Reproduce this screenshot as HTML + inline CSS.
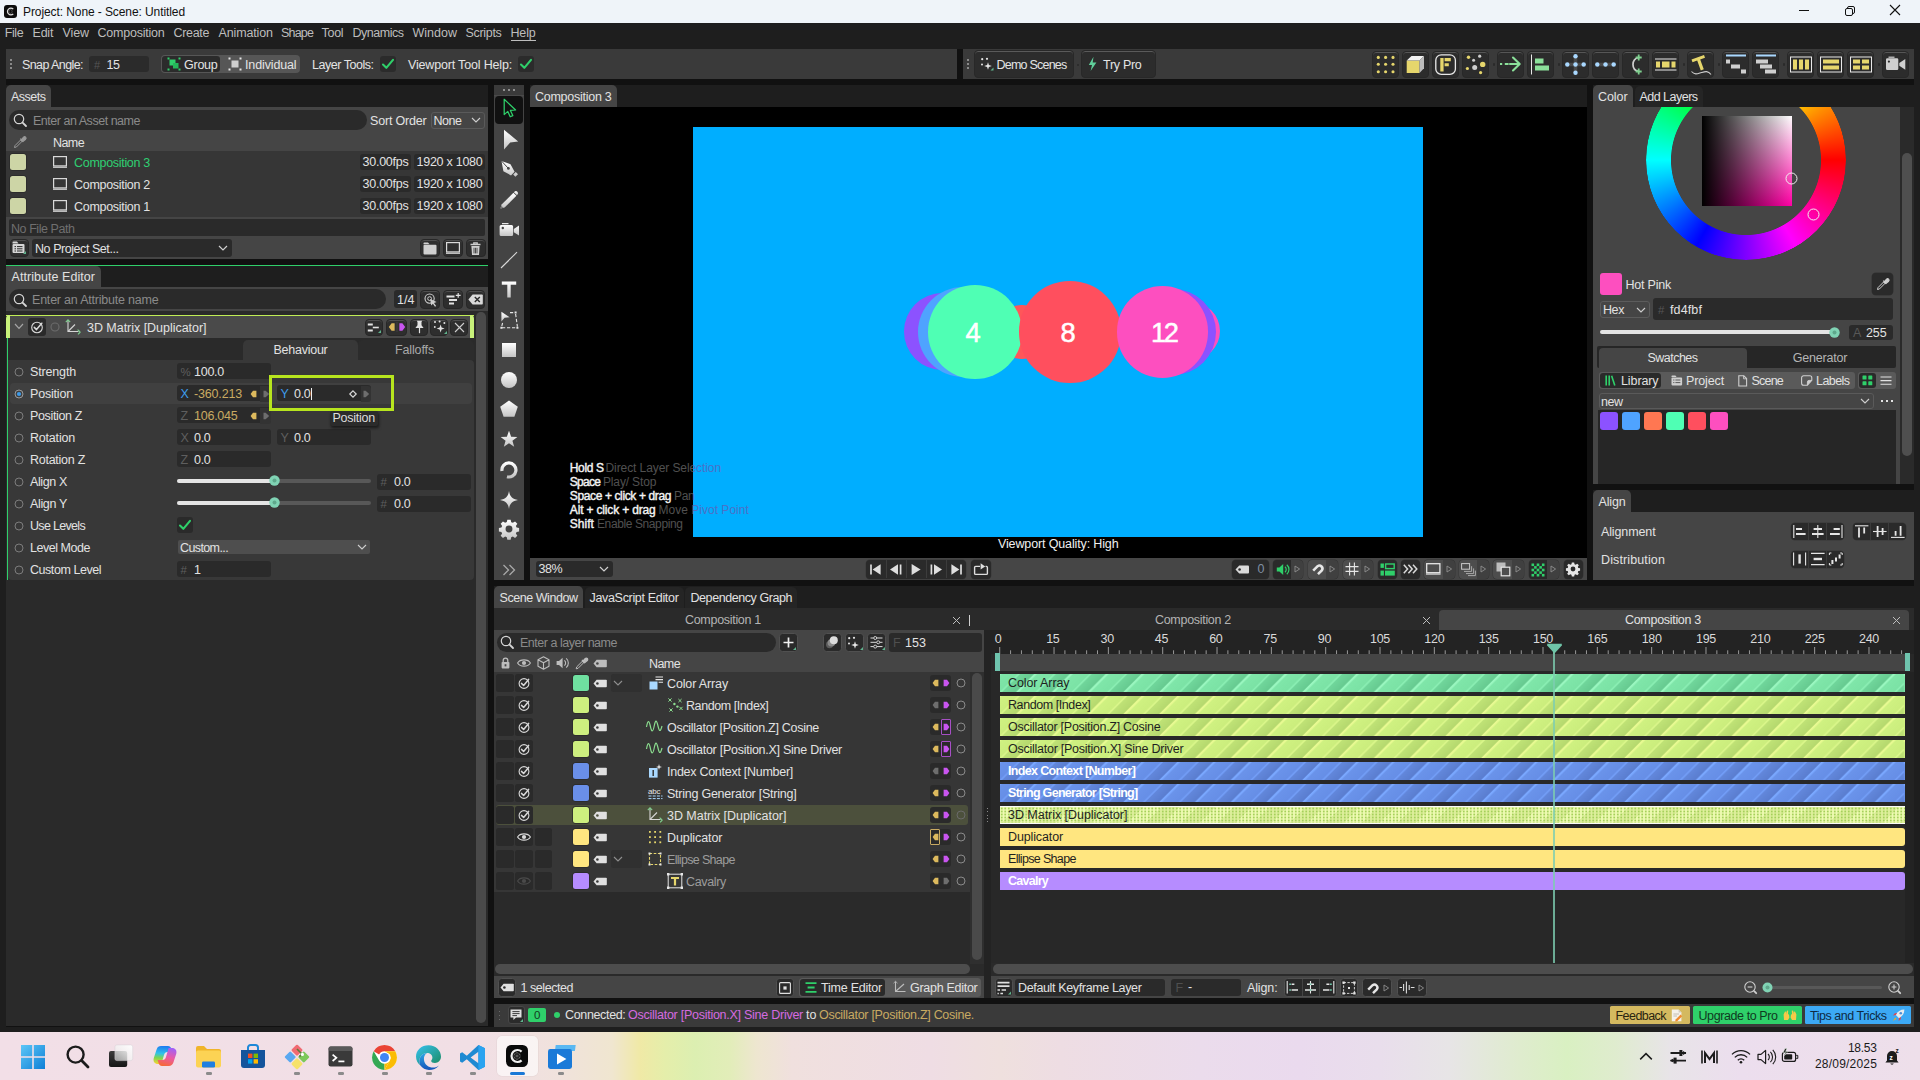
<!DOCTYPE html>
<html><head><meta charset="utf-8"><title>Cavalry</title><style>html,body{margin:0;padding:0;width:1920px;height:1080px;overflow:hidden;background:#1e1e1e;font-family:"Liberation Sans",sans-serif;}
.a{position:absolute;box-sizing:border-box;}
.t{white-space:pre;}
svg{overflow:visible;}</style></head><body>
<div class="a" style="left:0px;top:0px;width:1920px;height:23px;background:#eff4f9;"></div>
<svg class="a" style="left:3.7px;top:4.7px;" width="13" height="13" viewBox="0 0 13 13"><rect x="0" y="0" width="13" height="13" rx="3" fill="#0c0c0c"/><path d="M9.3 4.1 A3.4 3.4 0 1 0 9.3 8.9" fill="none" stroke="#e0e0e0" stroke-width="1.2"/><path d="M6.5 4.6 L8.1 5.5 V7.5 L6.5 8.4 L4.9 7.5 V5.5 Z" fill="none" stroke="#8a8a8a" stroke-width="0.45"/></svg>
<span class="a t" style="top:3.50px;line-height:16px;font-size:12px;letter-spacing:-0.089px;color:#111;left:23px;">Project: None - Scene: Untitled</span>
<svg class="a" style="left:1798px;top:5px;" width="12" height="12" viewBox="0 0 12 12"><path d="M1 5.5 H11" stroke="#111" stroke-width="1"/></svg>
<svg class="a" style="left:1844px;top:5px;" width="12" height="12" viewBox="0 0 12 12"><rect x="1.5" y="3.5" width="7" height="7" rx="1.5" fill="none" stroke="#111"/><path d="M3.5 3.5 V3 a1.5 1.5 0 0 1 1.5 -1.5 H9 a1.5 1.5 0 0 1 1.5 1.5 V7 a1.5 1.5 0 0 1 -1.5 1.5 H8.5" fill="none" stroke="#111"/></svg>
<svg class="a" style="left:1889px;top:4px;" width="12" height="12" viewBox="0 0 12 12"><path d="M1 1 L11 11 M11 1 L1 11" stroke="#111" stroke-width="1.1"/></svg>
<div class="a" style="left:0px;top:23px;width:1920px;height:1009px;background:#1e1e1e;"></div>
<div class="a" style="left:6px;top:79px;width:1908px;height:947.5px;background:#111111;"></div>
<div class="a" style="left:6px;top:85px;width:482px;height:22px;background:#1e1e1e;"></div>
<div class="a" style="left:6px;top:266px;width:482px;height:22px;background:#1e1e1e;"></div>
<div class="a" style="left:530px;top:85px;width:1057px;height:22px;background:#1e1e1e;"></div>
<div class="a" style="left:1593px;top:85px;width:321px;height:22px;background:#1e1e1e;"></div>
<div class="a" style="left:1593px;top:490px;width:321px;height:22px;background:#1e1e1e;"></div>
<div class="a" style="left:494px;top:586px;width:1420px;height:22px;background:#1e1e1e;"></div>
<span class="a t" style="top:25.00px;line-height:16px;font-size:12.5px;letter-spacing:-0.411px;color:#bdbdbd;left:4.7px;">File</span>
<span class="a t" style="top:25.00px;line-height:16px;font-size:12.5px;letter-spacing:-0.210px;color:#bdbdbd;left:32.5px;">Edit</span>
<span class="a t" style="top:25.00px;line-height:16px;font-size:12.5px;letter-spacing:-0.092px;color:#bdbdbd;left:62.5px;">View</span>
<span class="a t" style="top:25.00px;line-height:16px;font-size:12.5px;letter-spacing:-0.225px;color:#bdbdbd;left:97.5px;">Composition</span>
<span class="a t" style="top:25.00px;line-height:16px;font-size:12.5px;letter-spacing:-0.337px;color:#bdbdbd;left:173.5px;">Create</span>
<span class="a t" style="top:25.00px;line-height:16px;font-size:12.5px;letter-spacing:-0.143px;color:#bdbdbd;left:218.5px;">Animation</span>
<span class="a t" style="top:25.00px;line-height:16px;font-size:12.5px;letter-spacing:-0.829px;color:#bdbdbd;left:281px;">Shape</span>
<span class="a t" style="top:25.00px;line-height:16px;font-size:12.5px;letter-spacing:-0.283px;color:#bdbdbd;left:321.5px;">Tool</span>
<span class="a t" style="top:25.00px;line-height:16px;font-size:12.5px;letter-spacing:-0.484px;color:#bdbdbd;left:352.5px;">Dynamics</span>
<span class="a t" style="top:25.00px;line-height:16px;font-size:12.5px;letter-spacing:0.007px;color:#bdbdbd;left:412.5px;">Window</span>
<span class="a t" style="top:25.00px;line-height:16px;font-size:12.5px;letter-spacing:-0.315px;color:#bdbdbd;left:465.5px;">Scripts</span>
<span class="a t" style="top:25.00px;line-height:16px;font-size:12.5px;letter-spacing:-0.177px;color:#bdbdbd;left:510.5px;">Help</span>
<div class="a" style="left:510.5px;top:40px;width:25px;height:1px;background:#bdbdbd;"></div>
<div class="a" style="left:6px;top:49px;width:951px;height:30px;background:#3a3a3a;"></div>
<div class="a" style="left:10px;top:59px;width:2px;height:2px;background:#8a8a8a;"></div>
<div class="a" style="left:10px;top:63px;width:2px;height:2px;background:#8a8a8a;"></div>
<div class="a" style="left:10px;top:67px;width:2px;height:2px;background:#8a8a8a;"></div>
<span class="a t" style="top:56.50px;line-height:16px;font-size:12.5px;letter-spacing:-0.584px;color:#e4e4e4;left:22px;">Snap Angle:</span>
<div class="a" style="left:89px;top:56px;width:60px;height:16px;background:#2b2b2b;border-radius:3px;"></div>
<span class="a t" style="top:56.50px;line-height:16px;font-size:11px;letter-spacing:-0.264px;color:#555;left:94px;">#</span>
<span class="a t" style="top:56.50px;line-height:16px;font-size:12.5px;letter-spacing:-0.452px;color:#e4e4e4;left:106.5px;">15</span>
<div class="a" style="left:161px;top:55px;width:139px;height:18px;background:#565656;border-radius:4px;"></div>
<div class="a" style="left:162px;top:56px;width:58px;height:16px;background:#2b2b2b;border-radius:3px;"></div>
<svg class="a" style="left:167px;top:57px;" width="14" height="14" viewBox="0 0 14 14"><rect x="2.5" y="2.5" width="6" height="6" fill="#2fd06a"/><rect x="6" y="6" width="5.5" height="5.5" fill="#25b85a"/><path d="M0.5 0.5h2v2h-2z M11.5 0.5h2v2h-2z M0.5 11.5h2v2h-2z M11.5 11.5h2v2h-2z" fill="#2fd06a"/></svg>
<span class="a t" style="top:56.50px;line-height:16px;font-size:12.5px;letter-spacing:-0.248px;color:#e4e4e4;left:184px;">Group</span>
<svg class="a" style="left:228px;top:57px;" width="14" height="14" viewBox="0 0 14 14"><rect x="3.5" y="3.5" width="7" height="7" fill="#cfcfcf"/><path d="M0.5 0.5h2v2h-2z M11.5 0.5h2v2h-2z M0.5 11.5h2v2h-2z M11.5 11.5h2v2h-2z" fill="#e6e6e6"/></svg>
<span class="a t" style="top:56.50px;line-height:16px;font-size:12.5px;letter-spacing:-0.132px;color:#e4e4e4;left:245px;">Individual</span>
<span class="a t" style="top:56.50px;line-height:16px;font-size:12.5px;letter-spacing:-0.473px;color:#e4e4e4;left:312px;">Layer Tools:</span>
<div class="a" style="left:380px;top:56px;width:16px;height:16px;background:#2b2b2b;border-radius:3px;"></div>
<svg class="a" style="left:380px;top:56px;" width="16" height="16" viewBox="0 0 16 16"><path d="M3 8.6 L6.3 11.8 L13 3.8" fill="none" stroke="#2fd06a" stroke-width="2.1" stroke-linecap="round" stroke-linejoin="round"/></svg>
<span class="a t" style="top:56.50px;line-height:16px;font-size:12.5px;letter-spacing:-0.171px;color:#e4e4e4;left:408px;">Viewport Tool Help:</span>
<div class="a" style="left:518px;top:56px;width:16px;height:16px;background:#2b2b2b;border-radius:3px;"></div>
<svg class="a" style="left:518px;top:56px;" width="16" height="16" viewBox="0 0 16 16"><path d="M3 8.6 L6.3 11.8 L13 3.8" fill="none" stroke="#2fd06a" stroke-width="2.1" stroke-linecap="round" stroke-linejoin="round"/></svg>
<div class="a" style="left:957px;top:49px;width:6px;height:30px;background:#111111;"></div>
<div class="a" style="left:963px;top:49px;width:951px;height:30px;background:#3a3a3a;"></div>
<div class="a" style="left:967px;top:59px;width:2px;height:2px;background:#8a8a8a;"></div>
<div class="a" style="left:967px;top:63px;width:2px;height:2px;background:#8a8a8a;"></div>
<div class="a" style="left:967px;top:67px;width:2px;height:2px;background:#8a8a8a;"></div>
<div class="a" style="left:974px;top:50.3px;width:99.5px;height:27.4px;background:#2c2c2c;border-radius:4px;border:1px solid #282828;box-shadow:inset 0 1px 0 rgba(255,255,255,0.22);"></div>
<svg class="a" style="left:980px;top:57px;" width="14" height="14" viewBox="0 0 14 14"><path d="M8 5.2 L8.9 8.1 L11.8 9 L8.9 9.9 L8 12.8 L7.1 9.9 L4.2 9 L7.1 8.1 Z" fill="#e6e6e6"/><circle cx="2.2" cy="2.2" r="1.1" fill="#e6e6e6"/><circle cx="7" cy="1.8" r="1.1" fill="#e6e6e6"/><circle cx="2" cy="7.5" r="1" fill="#e6e6e6"/><path d="M13.5 10.5 V13.5 H10.5 Z" fill="#5fb38d"/></svg>
<span class="a t" style="top:56.50px;line-height:16px;font-size:12.5px;letter-spacing:-0.774px;color:#e4e4e4;left:996.5px;">Demo Scenes</span>
<div class="a" style="left:1076.5px;top:63.5px;width:2px;height:2px;background:#2a2a2a;border-radius:1px;"></div>
<div class="a" style="left:1081px;top:50.3px;width:74.5px;height:27.4px;background:#2c2c2c;border-radius:4px;border:1px solid #282828;box-shadow:inset 0 1px 0 rgba(255,255,255,0.22);"></div>
<svg class="a" style="left:1087px;top:56px;" width="11" height="16" viewBox="0 0 11 16"><path d="M6.5 0.8 L1.8 9 H5 L3.6 15 L9.4 6.4 H5.7 Z" fill="#5fcf9a"/></svg>
<span class="a t" style="top:56.50px;line-height:16px;font-size:12.5px;letter-spacing:-0.287px;color:#e4e4e4;left:1103px;">Try Pro</span>
<div class="a" style="left:1492.5px;top:63px;width:2.5px;height:2.5px;background:#2a2a2a;border-radius:1.5px;"></div>
<div class="a" style="left:1557.5px;top:63px;width:2.5px;height:2.5px;background:#2a2a2a;border-radius:1.5px;"></div>
<div class="a" style="left:1682.5px;top:63px;width:2.5px;height:2.5px;background:#2a2a2a;border-radius:1.5px;"></div>
<div class="a" style="left:1717.5px;top:63px;width:2.5px;height:2.5px;background:#2a2a2a;border-radius:1.5px;"></div>
<div class="a" style="left:1782.5px;top:63px;width:2.5px;height:2.5px;background:#2a2a2a;border-radius:1.5px;"></div>
<div class="a" style="left:1877.5px;top:63px;width:2.5px;height:2.5px;background:#2a2a2a;border-radius:1.5px;"></div>
<div class="a" style="left:1372px;top:50.5px;width:27px;height:27px;background:#2c2c2c;border-radius:4px;border:1px solid #282828;box-shadow:inset 0 1px 0 rgba(255,255,255,0.2);"></div>
<svg class="a" style="left:1372px;top:50.5px;" width="27" height="27" viewBox="0 0 27 27"><circle cx="6.3" cy="6.4" r="1.55" fill="#e6d66c"/><circle cx="6.3" cy="13.3" r="1.55" fill="#e6d66c"/><circle cx="6.3" cy="20.8" r="1.55" fill="#e6d66c"/><circle cx="13.6" cy="6.4" r="1.55" fill="#e6d66c"/><circle cx="13.6" cy="13.3" r="1.55" fill="#e6d66c"/><circle cx="13.6" cy="20.8" r="1.55" fill="#e6d66c"/><circle cx="21" cy="6.4" r="1.55" fill="#e6d66c"/><circle cx="21" cy="13.3" r="1.55" fill="#e6d66c"/><circle cx="21" cy="20.8" r="1.55" fill="#e6d66c"/></svg>
<div class="a" style="left:1402px;top:50.5px;width:27px;height:27px;background:#2c2c2c;border-radius:4px;border:1px solid #282828;box-shadow:inset 0 1px 0 rgba(255,255,255,0.2);"></div>
<svg class="a" style="left:1402px;top:50.5px;" width="27" height="27" viewBox="0 0 27 27"><path d="M4.7 9.6 H17.5 V22 H4.7 Z" fill="#e6d66c"/><path d="M4.7 9.6 L9.5 5 H22 L17.5 9.6 Z" fill="#f3f3f3"/><path d="M17.5 9.6 L22 5 V17.2 L17.5 22 Z" fill="#bdbdbd"/></svg>
<div class="a" style="left:1432px;top:50.5px;width:27px;height:27px;background:#2c2c2c;border-radius:4px;border:1px solid #282828;box-shadow:inset 0 1px 0 rgba(255,255,255,0.2);"></div>
<svg class="a" style="left:1432px;top:50.5px;" width="27" height="27" viewBox="0 0 27 27"><rect x="3.8" y="3.8" width="19.6" height="19.6" rx="5.5" fill="none" stroke="#e9e9e9" stroke-width="1.3"/><path d="M8.3 7 H11.6 V20.5 H8.3 Z M12.6 7 H18.8 V10.2 H12.6 Z M12.6 12.2 H16.8 V15.2 H12.6 Z" fill="#e6d66c"/></svg>
<div class="a" style="left:1462px;top:50.5px;width:27px;height:27px;background:#2c2c2c;border-radius:4px;border:1px solid #282828;box-shadow:inset 0 1px 0 rgba(255,255,255,0.2);"></div>
<svg class="a" style="left:1462px;top:50.5px;" width="27" height="27" viewBox="0 0 27 27"><circle cx="6.5" cy="6.3" r="1.7" fill="#e6d66c"/><circle cx="17.7" cy="5.2" r="1.6" fill="#cfcfcf"/><circle cx="11.6" cy="9.3" r="1.5" fill="#cfcfcf"/><circle cx="20.7" cy="13.4" r="2.7" fill="#e6d66c"/><circle cx="12.7" cy="16.6" r="2.5" fill="#cfcfcf"/><circle cx="5.4" cy="17.5" r="1.6" fill="#e6d66c"/><circle cx="18.6" cy="21.6" r="1.6" fill="#e6d66c"/></svg>
<div class="a" style="left:1497px;top:50.5px;width:27px;height:27px;background:#2c2c2c;border-radius:4px;border:1px solid #282828;box-shadow:inset 0 1px 0 rgba(255,255,255,0.2);"></div>
<svg class="a" style="left:1497px;top:50.5px;" width="27" height="27" viewBox="0 0 27 27"><path d="M3 13 H5.2 M7.8 13 H11.6" stroke="#8be09a" stroke-width="2" /><path d="M13 13 H22.5 M16 6.5 L22.7 13 L16 19.5" fill="none" stroke="#8be09a" stroke-width="2.1" stroke-linecap="round" stroke-linejoin="round"/></svg>
<div class="a" style="left:1527px;top:50.5px;width:27px;height:27px;background:#2c2c2c;border-radius:4px;border:1px solid #282828;box-shadow:inset 0 1px 0 rgba(255,255,255,0.2);"></div>
<svg class="a" style="left:1527px;top:50.5px;" width="27" height="27" viewBox="0 0 27 27"><path d="M4.5 3.5 V23.5" stroke="#e9e9e9" stroke-width="1"/><rect x="8" y="7.5" width="8.5" height="5" fill="#8be09a"/><rect x="8" y="14.5" width="14" height="5" fill="#8be09a"/></svg>
<div class="a" style="left:1562px;top:50.5px;width:27px;height:27px;background:#2c2c2c;border-radius:4px;border:1px solid #282828;box-shadow:inset 0 1px 0 rgba(255,255,255,0.2);"></div>
<svg class="a" style="left:1562px;top:50.5px;" width="27" height="27" viewBox="0 0 27 27"><path d="M13.5 5.5 V21.5 M5.5 13.5 H21.5" stroke="#4a4a4a" stroke-width="3.6"/><circle cx="13.5" cy="5.3" r="2.2" fill="#a9d8ff"/><circle cx="5.3" cy="13.5" r="2.2" fill="#a9d8ff"/><circle cx="13.5" cy="13.5" r="2.2" fill="#a9d8ff"/><circle cx="21.7" cy="13.5" r="2.2" fill="#a9d8ff"/><circle cx="13.5" cy="21.7" r="2.2" fill="#a9d8ff"/></svg>
<div class="a" style="left:1592px;top:50.5px;width:27px;height:27px;background:#2c2c2c;border-radius:4px;border:1px solid #282828;box-shadow:inset 0 1px 0 rgba(255,255,255,0.2);"></div>
<svg class="a" style="left:1592px;top:50.5px;" width="27" height="27" viewBox="0 0 27 27"><path d="M5.5 13.5 H21.5" stroke="#4a4a4a" stroke-width="3.6"/><circle cx="5.3" cy="13.5" r="2.2" fill="#a9d8ff"/><circle cx="13.5" cy="13.5" r="2.2" fill="#a9d8ff"/><circle cx="21.7" cy="13.5" r="2.2" fill="#a9d8ff"/></svg>
<div class="a" style="left:1622px;top:50.5px;width:27px;height:27px;background:#2c2c2c;border-radius:4px;border:1px solid #282828;box-shadow:inset 0 1px 0 rgba(255,255,255,0.2);"></div>
<svg class="a" style="left:1622px;top:50.5px;" width="27" height="27" viewBox="0 0 27 27"><path d="M16.5 6.5 A7.2 7.2 0 0 0 16.5 20.5" fill="none" stroke="#cfcfcf" stroke-width="1.7"/><path d="M16.7 3.5 V9.5 M13.7 6.5 H19.7 M16.7 17.5 V23.5 M13.7 20.5 H19.7" stroke="#7fd08f" stroke-width="1.8"/></svg>
<div class="a" style="left:1652px;top:50.5px;width:27px;height:27px;background:#2c2c2c;border-radius:4px;border:1px solid #282828;box-shadow:inset 0 1px 0 rgba(255,255,255,0.2);"></div>
<svg class="a" style="left:1652px;top:50.5px;" width="27" height="27" viewBox="0 0 27 27"><path d="M3 8 H24.5 M3 19 H24.5" stroke="#e9e9e9" stroke-width="1"/><rect x="4" y="10.5" width="4" height="6" fill="#e6d66c"/><rect x="10" y="10.5" width="7.5" height="6" fill="#e6d66c"/><rect x="19.5" y="10.5" width="4" height="6" fill="#e6d66c"/></svg>
<div class="a" style="left:1687px;top:50.5px;width:27px;height:27px;background:#2c2c2c;border-radius:4px;border:1px solid #282828;box-shadow:inset 0 1px 0 rgba(255,255,255,0.2);"></div>
<svg class="a" style="left:1687px;top:50.5px;" width="27" height="27" viewBox="0 0 27 27"><path d="M4.5 8.5 L17 4 L18 6.8 L13.2 8.5 L16.8 18.3 L13.8 19.4 L10.2 9.6 L5.5 11.3 Z" fill="#e6d66c"/><path d="M4.5 20.5 C8 24.5 11 22.5 14.5 21.5 S21 19.5 24 23.5" fill="none" stroke="#cfcfcf" stroke-width="1.1"/></svg>
<div class="a" style="left:1722px;top:50.5px;width:27px;height:27px;background:#2c2c2c;border-radius:4px;border:1px solid #282828;box-shadow:inset 0 1px 0 rgba(255,255,255,0.2);"></div>
<svg class="a" style="left:1722px;top:50.5px;" width="27" height="27" viewBox="0 0 27 27"><rect x="4" y="3.5" width="20" height="2" fill="#a9d8ff"/><rect x="4" y="8.5" width="4" height="4" fill="#cfcfcf"/><rect x="9" y="13.5" width="9" height="4" fill="#cfcfcf"/><rect x="19" y="18.5" width="5" height="4" fill="#cfcfcf"/></svg>
<div class="a" style="left:1752px;top:50.5px;width:27px;height:27px;background:#2c2c2c;border-radius:4px;border:1px solid #282828;box-shadow:inset 0 1px 0 rgba(255,255,255,0.2);"></div>
<svg class="a" style="left:1752px;top:50.5px;" width="27" height="27" viewBox="0 0 27 27"><rect x="4" y="3.5" width="20" height="2" fill="#a9d8ff"/><rect x="4" y="8.5" width="12" height="4" fill="#cfcfcf"/><rect x="8" y="13.5" width="12" height="4" fill="#cfcfcf"/><rect x="13" y="18.5" width="11" height="4" fill="#cfcfcf"/></svg>
<div class="a" style="left:1787px;top:50.5px;width:27px;height:27px;background:#2c2c2c;border-radius:4px;border:1px solid #282828;box-shadow:inset 0 1px 0 rgba(255,255,255,0.2);"></div>
<svg class="a" style="left:1787px;top:50.5px;" width="27" height="27" viewBox="0 0 27 27"><rect x="3.5" y="6" width="21" height="15" fill="none" stroke="#e9e9e9" stroke-width="1"/><rect x="6" y="8.5" width="4" height="10" fill="#e6d66c"/><rect x="12" y="8.5" width="4" height="10" fill="#e6d66c"/><rect x="18" y="8.5" width="4" height="10" fill="#e6d66c"/></svg>
<div class="a" style="left:1817px;top:50.5px;width:27px;height:27px;background:#2c2c2c;border-radius:4px;border:1px solid #282828;box-shadow:inset 0 1px 0 rgba(255,255,255,0.2);"></div>
<svg class="a" style="left:1817px;top:50.5px;" width="27" height="27" viewBox="0 0 27 27"><rect x="3.5" y="6" width="21" height="15" fill="none" stroke="#e9e9e9" stroke-width="1"/><rect x="6" y="8.5" width="16" height="4" fill="#e6d66c"/><rect x="6" y="14.5" width="16" height="4" fill="#e6d66c"/></svg>
<div class="a" style="left:1847px;top:50.5px;width:27px;height:27px;background:#2c2c2c;border-radius:4px;border:1px solid #282828;box-shadow:inset 0 1px 0 rgba(255,255,255,0.2);"></div>
<svg class="a" style="left:1847px;top:50.5px;" width="27" height="27" viewBox="0 0 27 27"><rect x="3.5" y="6" width="21" height="15" fill="none" stroke="#e9e9e9" stroke-width="1"/><rect x="6" y="8.5" width="7" height="4" fill="#e6d66c"/><rect x="15" y="8.5" width="7" height="4" fill="#e6d66c"/><rect x="6" y="14.5" width="7" height="4" fill="#e6d66c"/><rect x="15" y="14.5" width="7" height="4" fill="#e6d66c"/></svg>
<div class="a" style="left:1882px;top:50.5px;width:27px;height:27px;background:#2c2c2c;border-radius:4px;border:1px solid #282828;box-shadow:inset 0 1px 0 rgba(255,255,255,0.2);"></div>
<svg class="a" style="left:1882px;top:50.5px;" width="27" height="27" viewBox="0 0 27 27"><path d="M4 8.6 a1.3 1.3 0 0 1 1.3 -1.3 H15 a1.3 1.3 0 0 1 1.3 1.3 V17.8 a1.3 1.3 0 0 1 -1.3 1.3 H5.3 a1.3 1.3 0 0 1 -1.3 -1.3 Z M17.3 12 L23.3 8 V18.8 L17.3 14.8 Z" fill="#cfcfcf"/><rect x="6.5" y="5.6" width="6" height="1.2" fill="#cfcfcf"/><circle cx="6.9" cy="10.6" r="1.1" fill="#2b2b2b"/></svg>
<div class="a" style="left:6px;top:85px;width:45px;height:23px;background:#454545;border-radius:5px 5px 0 0;"></div>
<span class="a t" style="top:88.50px;line-height:16px;font-size:12.5px;letter-spacing:-0.502px;color:#e2e2e2;left:11px;">Assets</span>
<div class="a" style="left:6px;top:107px;width:482px;height:152px;background:#454545;"></div>
<div class="a" style="left:9px;top:110px;width:358px;height:20px;background:#2a2a2a;border-radius:10px;"></div>
<svg class="a" style="left:13px;top:113px;" width="14" height="14" viewBox="0 0 14 14"><circle cx="6" cy="6" r="4.7" fill="none" stroke="#d6d6d6" stroke-width="1.2"/><path d="M9.6 9.6 L13 13" stroke="#d6d6d6" stroke-width="1.8" stroke-linecap="round"/></svg>
<span class="a t" style="top:112.50px;line-height:16px;font-size:12.5px;letter-spacing:-0.476px;color:#8a8a8a;left:33px;">Enter an Asset name</span>
<span class="a t" style="top:112.50px;line-height:16px;font-size:12.5px;letter-spacing:-0.185px;color:#e2e2e2;left:370px;">Sort Order</span>
<div class="a" style="left:430.5px;top:112px;width:54px;height:16.5px;background:#454545;border-radius:3px;border:1px solid #5a5a5a;"></div>
<span class="a t" style="top:112.50px;line-height:16px;font-size:12.5px;letter-spacing:-0.471px;color:#e2e2e2;left:433.5px;">None</span>
<svg class="a" style="left:471px;top:117px;" width="10" height="7" viewBox="0 0 10 7"><path d="M1 1 L5 5 L9 1" fill="none" stroke="#cfcfcf" stroke-width="1.1"/></svg>
<svg class="a" style="left:13px;top:135px;" width="14" height="14" viewBox="0 0 14 14"><path d="M1.5 12.5 L2 10.6 L7.6 5 L9 6.4 L3.4 12 Z" fill="none" stroke="#9a9a9a" stroke-width="1"/><path d="M7.2 3.6 L10.4 6.8 M8 5.2 L10.6 2.2 a1.4 1.4 0 0 1 2 2 L9.8 6.6 Z" fill="#9a9a9a" stroke="#9a9a9a" stroke-width="1.2" stroke-linejoin="round"/></svg>
<span class="a t" style="top:134.50px;line-height:16px;font-size:12.5px;letter-spacing:-0.586px;color:#e2e2e2;left:53px;">Name</span>
<div class="a" style="left:6px;top:151px;width:482px;height:66px;background:#363636;"></div>
<div class="a" style="left:10px;top:154px;width:16px;height:16px;background:#cdd5a6;border-radius:2.5px;box-shadow:0 0 0 0.7px #2a2a2a;"></div>
<svg class="a" style="left:53px;top:156px;" width="14" height="12" viewBox="0 0 14 12"><rect x="0.6" y="0.6" width="12.8" height="9.3" fill="none" stroke="#d9d9d9" stroke-width="1.2"/><rect x="0" y="10.4" width="14" height="1.6" fill="#bdbdbd"/></svg>
<span class="a t" style="top:154.50px;line-height:16px;font-size:12.5px;letter-spacing:-0.300px;color:#2fcf72;left:74px;">Composition 3</span>
<div class="a" style="left:360px;top:154px;width:51px;height:15.5px;background:#2a2a2a;border-radius:3px;"></div>
<span class="a t" style="top:154.00px;line-height:16px;font-size:12.5px;letter-spacing:-0.245px;color:#e2e2e2;left:362.5px;">30.00fps</span>
<div class="a" style="left:414px;top:154px;width:71px;height:15.5px;background:#2a2a2a;border-radius:3px;"></div>
<span class="a t" style="top:154.00px;line-height:16px;font-size:12.5px;letter-spacing:-0.256px;color:#e2e2e2;left:416.5px;">1920 x 1080</span>
<div class="a" style="left:10px;top:176px;width:16px;height:16px;background:#cdd5a6;border-radius:2.5px;box-shadow:0 0 0 0.7px #2a2a2a;"></div>
<svg class="a" style="left:53px;top:178px;" width="14" height="12" viewBox="0 0 14 12"><rect x="0.6" y="0.6" width="12.8" height="9.3" fill="none" stroke="#d9d9d9" stroke-width="1.2"/><rect x="0" y="10.4" width="14" height="1.6" fill="#bdbdbd"/></svg>
<span class="a t" style="top:176.50px;line-height:16px;font-size:12.5px;letter-spacing:-0.300px;color:#e2e2e2;left:74px;">Composition 2</span>
<div class="a" style="left:360px;top:176px;width:51px;height:15.5px;background:#2a2a2a;border-radius:3px;"></div>
<span class="a t" style="top:176.00px;line-height:16px;font-size:12.5px;letter-spacing:-0.245px;color:#e2e2e2;left:362.5px;">30.00fps</span>
<div class="a" style="left:414px;top:176px;width:71px;height:15.5px;background:#2a2a2a;border-radius:3px;"></div>
<span class="a t" style="top:176.00px;line-height:16px;font-size:12.5px;letter-spacing:-0.256px;color:#e2e2e2;left:416.5px;">1920 x 1080</span>
<div class="a" style="left:10px;top:198px;width:16px;height:16px;background:#cdd5a6;border-radius:2.5px;box-shadow:0 0 0 0.7px #2a2a2a;"></div>
<svg class="a" style="left:53px;top:200px;" width="14" height="12" viewBox="0 0 14 12"><rect x="0.6" y="0.6" width="12.8" height="9.3" fill="none" stroke="#d9d9d9" stroke-width="1.2"/><rect x="0" y="10.4" width="14" height="1.6" fill="#bdbdbd"/></svg>
<span class="a t" style="top:198.50px;line-height:16px;font-size:12.5px;letter-spacing:-0.300px;color:#e2e2e2;left:74px;">Composition 1</span>
<div class="a" style="left:360px;top:198px;width:51px;height:15.5px;background:#2a2a2a;border-radius:3px;"></div>
<span class="a t" style="top:198.00px;line-height:16px;font-size:12.5px;letter-spacing:-0.245px;color:#e2e2e2;left:362.5px;">30.00fps</span>
<div class="a" style="left:414px;top:198px;width:71px;height:15.5px;background:#2a2a2a;border-radius:3px;"></div>
<span class="a t" style="top:198.00px;line-height:16px;font-size:12.5px;letter-spacing:-0.256px;color:#e2e2e2;left:416.5px;">1920 x 1080</span>
<div class="a" style="left:9px;top:219px;width:476px;height:17px;background:#2a2a2a;border-radius:2px;"></div>
<span class="a t" style="top:221.00px;line-height:16px;font-size:12.5px;letter-spacing:-0.440px;color:#6f6f6f;left:11px;">No File Path</span>
<div class="a" style="left:9.5px;top:238.5px;width:19px;height:18.5px;background:#2e2e2e;border-radius:4px;border:1px solid #272727;box-shadow:inset 0 1px 0 rgba(255,255,255,0.16);"></div>
<svg class="a" style="left:12px;top:241px;" width="14" height="13" viewBox="0 0 14 13"><path d="M0.5 2.5 V1.5 a1 1 0 0 1 1 -1 H5 L6.5 2.5 Z" fill="#d6d6d6"/><rect x="0.5" y="3" width="12" height="9" rx="1" fill="#d6d6d6"/><path d="M2.5 5.6 H4 M5 5.6 H10.5 M2.5 7.8 H4 M5 7.8 H10.5 M2.5 10 H4 M5 10 H10.5" stroke="#2b2b2b" stroke-width="1"/><path d="M14 10 V13 H11 Z" fill="#5fb38d"/></svg>
<div class="a" style="left:32px;top:239px;width:200px;height:18px;background:#2a2a2a;border-radius:3px;"></div>
<span class="a t" style="top:240.50px;line-height:16px;font-size:12.5px;letter-spacing:-0.442px;color:#e2e2e2;left:35px;">No Project Set...</span>
<svg class="a" style="left:218px;top:245px;" width="10" height="7" viewBox="0 0 10 7"><path d="M1 1 L5 5 L9 1" fill="none" stroke="#cfcfcf" stroke-width="1.2"/></svg>
<div class="a" style="left:420px;top:238.5px;width:19.5px;height:18.5px;background:#2e2e2e;border-radius:4px;border:1px solid #272727;box-shadow:inset 0 1px 0 rgba(255,255,255,0.16);"></div>
<div class="a" style="left:443px;top:238.5px;width:19.5px;height:18.5px;background:#2e2e2e;border-radius:4px;border:1px solid #272727;box-shadow:inset 0 1px 0 rgba(255,255,255,0.16);"></div>
<div class="a" style="left:466px;top:238.5px;width:19.5px;height:18.5px;background:#2e2e2e;border-radius:4px;border:1px solid #272727;box-shadow:inset 0 1px 0 rgba(255,255,255,0.16);"></div>
<svg class="a" style="left:422.5px;top:241.5px;" width="14" height="13" viewBox="0 0 14 13"><path d="M0.5 2.2 V1.2 a0.8 0.8 0 0 1 .8 -.8 H5 L6.6 2.2 Z" fill="#cfcfcf"/><rect x="0.5" y="2.8" width="13" height="9.6" rx="1" fill="#cfcfcf"/></svg>
<svg class="a" style="left:445.5px;top:242px;" width="14" height="12" viewBox="0 0 14 12"><rect x="0.6" y="0.6" width="12.8" height="9.3" fill="none" stroke="#d9d9d9" stroke-width="1.2"/><rect x="0" y="10.4" width="14" height="1.6" fill="#bdbdbd"/></svg>
<svg class="a" style="left:470px;top:241.5px;" width="11" height="14" viewBox="0 0 11 14"><path d="M0.5 2.5 H10.5 M3.8 2.3 V0.8 H7.2 V2.3" fill="none" stroke="#cfcfcf" stroke-width="1.3"/><path d="M1.4 4 H9.6 L9 13 H2 Z" fill="#cfcfcf"/><path d="M4 5.8 V11.4 M5.5 5.8 V11.4 M7 5.8 V11.4" stroke="#2b2b2b" stroke-width="0.8"/></svg>
<div class="a" style="left:6px;top:265px;width:482px;height:1px;background:#2fd06a;"></div>
<div class="a" style="left:6px;top:266px;width:95px;height:22px;background:#454545;border-radius:0 5px 0 0;"></div>
<span class="a t" style="top:269.00px;line-height:16px;font-size:12.5px;letter-spacing:0.051px;color:#e2e2e2;left:11.5px;">Attribute Editor</span>
<div class="a" style="left:6px;top:287px;width:482px;height:25px;background:#454545;"></div>
<div class="a" style="left:6px;top:311px;width:482px;height:714.5px;background:#2a2a2a;"></div>
<div class="a" style="left:9px;top:289px;width:377px;height:20px;background:#2a2a2a;border-radius:10px;"></div>
<svg class="a" style="left:12.5px;top:292.5px;" width="14" height="14" viewBox="0 0 14 14"><circle cx="6" cy="6" r="4.7" fill="none" stroke="#d6d6d6" stroke-width="1.2"/><path d="M9.6 9.6 L13 13" stroke="#d6d6d6" stroke-width="1.8" stroke-linecap="round"/></svg>
<span class="a t" style="top:291.50px;line-height:16px;font-size:12.5px;letter-spacing:-0.210px;color:#8a8a8a;left:32px;">Enter an Attribute name</span>
<div class="a" style="left:394px;top:290px;width:23px;height:18px;background:#2a2a2a;border-radius:3px;"></div>
<span class="a t" style="top:291.50px;line-height:16px;font-size:12.5px;letter-spacing:0.041px;color:#e2e2e2;left:397px;">1/4</span>
<div class="a" style="left:420px;top:290px;width:19.5px;height:18.5px;background:#2e2e2e;border-radius:4px;border:1px solid #272727;box-shadow:inset 0 1px 0 rgba(255,255,255,0.16);"></div>
<div class="a" style="left:443px;top:290px;width:19.5px;height:18.5px;background:#2e2e2e;border-radius:4px;border:1px solid #272727;box-shadow:inset 0 1px 0 rgba(255,255,255,0.16);"></div>
<div class="a" style="left:465.5px;top:290px;width:19.5px;height:18.5px;background:#2e2e2e;border-radius:4px;border:1px solid #272727;box-shadow:inset 0 1px 0 rgba(255,255,255,0.16);"></div>
<svg class="a" style="left:423.5px;top:292.5px;" width="14" height="14" viewBox="0 0 14 14"><circle cx="5.6" cy="5.6" r="4.6" fill="none" stroke="#cfcfcf" stroke-width="1.1"/><circle cx="5.6" cy="5.6" r="1.9" fill="none" stroke="#cfcfcf" stroke-width="1"/><path d="M6.2 6 L12.6 9 L10 10 L12.2 13 L11 13.8 L8.9 10.8 L7.2 12.6 Z" fill="#cfcfcf"/></svg>
<svg class="a" style="left:446px;top:293px;" width="15" height="13" viewBox="0 0 15 13"><path d="M0.5 3.6 H8.5 M3 7 H11 M3 10.4 H8" stroke="#e2e2e2" stroke-width="2"/><path d="M9.8 2.4 H14.6 M12.2 0 V4.8" stroke="#e2e2e2" stroke-width="1.2"/></svg>
<svg class="a" style="left:468px;top:293.5px;" width="15" height="11" viewBox="0 0 15 11"><path d="M0.4 5.5 L4.6 0.5 H14 a0.8 0.8 0 0 1 .8 .8 V9.7 a0.8 0.8 0 0 1 -.8 .8 H4.6 Z" fill="#d9d9d9"/><path d="M6.8 3 L11.8 8 M11.8 3 L6.8 8" stroke="#2b2b2b" stroke-width="1.4"/></svg>
<div class="a" style="left:476.3px;top:312px;width:9.7px;height:711px;background:#4a4a4a;border-radius:4.85px;"></div>
<div class="a" style="left:6px;top:315px;width:468px;height:23px;background:#4a4a4a;border-radius:4px 0 0 0;"></div>
<div class="a" style="left:6px;top:315px;width:468px;height:1px;background:#c1ee55;"></div>
<div class="a" style="left:6px;top:315px;width:4px;height:23px;background:#c8f17a;border-radius:4px 0 0 0;"></div>
<div class="a" style="left:470px;top:315px;width:4px;height:23px;background:#c8f17a;border-radius:0 4px 0 0;"></div>
<svg class="a" style="left:14px;top:323px;" width="10" height="7" viewBox="0 0 10 7"><path d="M1 1 L5 5.4 L9 1" fill="none" stroke="#a5a5a5" stroke-width="1.2"/></svg>
<div class="a" style="left:28px;top:318px;width:18px;height:18px;background:#2a2a2a;border-radius:3px;"></div>
<svg class="a" style="left:30px;top:319.5px;" width="14" height="14" viewBox="0 0 14 14"><circle cx="7" cy="7.5" r="5.3" fill="none" stroke="#d9d9d9" stroke-width="1.1"/><path d="M4.3 7.4 L6.5 9.6 L11.8 3.2" fill="none" stroke="#d9d9d9" stroke-width="1.5" stroke-linecap="round" stroke-linejoin="round"/></svg>
<svg class="a" style="left:50px;top:322px;" width="10" height="10" viewBox="0 0 10 10"><circle cx="5" cy="5" r="4" fill="none" stroke="#6c6c6c" stroke-width="1.1"/></svg>
<svg class="a" style="left:65px;top:319px;" width="17" height="17" viewBox="0 0 17 17"><path d="M3 1 V12.5 H13.5" fill="none" stroke="#d6d6d6" stroke-width="1.1"/><path d="M3 12.5 L10 5.5" stroke="#d6d6d6" stroke-width="1.1"/><path d="M0.8 3.2 L3 0.8 L5.2 3.2 M12.6 10.6 L15.2 13 M13 15.4 L15.4 13" fill="none" stroke="#7fd08f" stroke-width="1.1"/></svg>
<span class="a t" style="top:319.50px;line-height:16px;font-size:12.5px;letter-spacing:-0.031px;color:#e2e2e2;left:87px;">3D Matrix [Duplicator]</span>
<div class="a" style="left:365px;top:318.5px;width:17.5px;height:17.5px;background:#2e2e2e;border-radius:4px;border:1px solid #272727;box-shadow:inset 0 1px 0 rgba(255,255,255,0.16);"></div>
<div class="a" style="left:410px;top:318.5px;width:17.5px;height:17.5px;background:#2e2e2e;border-radius:4px;border:1px solid #272727;box-shadow:inset 0 1px 0 rgba(255,255,255,0.16);"></div>
<div class="a" style="left:430px;top:318.5px;width:17.5px;height:17.5px;background:#2e2e2e;border-radius:4px;border:1px solid #272727;box-shadow:inset 0 1px 0 rgba(255,255,255,0.16);"></div>
<div class="a" style="left:450px;top:318.5px;width:17.5px;height:17.5px;background:#2e2e2e;border-radius:4px;border:1px solid #272727;box-shadow:inset 0 1px 0 rgba(255,255,255,0.16);"></div>
<div class="a" style="left:386px;top:318.5px;width:21px;height:17.5px;background:#2e2e2e;border-radius:4px;border:1px solid #272727;box-shadow:inset 0 1px 0 rgba(255,255,255,0.16);"></div>
<svg class="a" style="left:367px;top:321.5px;" width="14" height="11" viewBox="0 0 14 11"><path d="M0.8 2.5 H5.8 M0.8 8.5 H5.8" stroke="#e2e2e2" stroke-width="1.9"/><path d="M5.8 5.5 H11.8" stroke="#e2e2e2" stroke-width="1.6"/><path d="M14 8 V11 H11 Z" fill="#5fb38d"/></svg>
<svg class="a" style="left:388px;top:322px;" width="18" height="10" viewBox="0 0 18 10"><path d="M0.8 5 L3.6 1.2 H6.6 V8.8 H3.6 Z" fill="#dcb95d"/><path d="M17.2 5 L14.4 1.2 H11.4 V8.8 H14.4 Z" fill="#c955f0"/><path d="M9 0 V10" stroke="#3e3e3e" stroke-width="1"/></svg>
<svg class="a" style="left:413.5px;top:320px;" width="11" height="14" viewBox="0 0 11 14"><path d="M2.8 0.8 H8.2 L7.5 2 V5.2 L9.6 8 H1.4 L3.5 5.2 V2 Z" fill="#e2e2e2"/><path d="M5.5 8 V13.2" stroke="#e2e2e2" stroke-width="1.2"/></svg>
<svg class="a" style="left:432.5px;top:320px;" width="14" height="14" viewBox="0 0 14 14"><path d="M7.6 4.6 L8.6 7.6 L11.6 8.6 L8.6 9.6 L7.6 12.6 L6.6 9.6 L3.6 8.6 L6.6 7.6 Z" fill="#e2e2e2"/><circle cx="2" cy="2" r="1" fill="#e2e2e2"/><circle cx="6.6" cy="1.6" r="1" fill="#e2e2e2"/><circle cx="11.4" cy="3" r="1" fill="#e2e2e2"/><circle cx="1.8" cy="7" r="0.9" fill="#e2e2e2"/><path d="M14 11 V14 H11 Z" fill="#5fb38d"/></svg>
<svg class="a" style="left:453.5px;top:321.5px;" width="11" height="11" viewBox="0 0 11 11"><path d="M1 1 L10 10 M10 1 L1 10" stroke="#cfcfcf" stroke-width="1.1"/></svg>
<div class="a" style="left:6.5px;top:338px;width:1px;height:242px;background:#2fd06a;"></div>
<div class="a" style="left:7.5px;top:338px;width:466.5px;height:22px;background:#2a2a2a;"></div>
<div class="a" style="left:243px;top:340px;width:115px;height:20px;background:#383838;border-radius:5px 5px 0 0;"></div>
<div class="a" style="left:358px;top:340px;width:116px;height:20px;background:#2c2c2c;border-radius:5px 5px 0 0;"></div>
<span class="a t" style="top:342.00px;line-height:16px;font-size:12.5px;letter-spacing:-0.254px;color:#e2e2e2;left:300.5px;transform:translateX(-50%);">Behaviour</span>
<span class="a t" style="top:342.00px;line-height:16px;font-size:12.5px;letter-spacing:-0.133px;color:#a9a9a9;left:414.5px;transform:translateX(-50%);">Falloffs</span>
<div class="a" style="left:7.5px;top:360px;width:466.5px;height:220px;background:#383838;border-radius:0 4px 4px 4px;"></div>
<div class="a" style="left:10px;top:383px;width:462px;height:20.5px;background:#404040;border-radius:4px;"></div>
<svg class="a" style="left:14px;top:366.5px;" width="10" height="10" viewBox="0 0 10 10"><circle cx="5" cy="5" r="4" fill="none" stroke="#7c7c7c" stroke-width="1"/></svg>
<span class="a t" style="top:363.50px;line-height:16px;font-size:12.5px;letter-spacing:-0.157px;color:#e2e2e2;left:30px;">Strength</span>
<svg class="a" style="left:14px;top:388.5px;" width="10" height="10" viewBox="0 0 10 10"><circle cx="5" cy="5" r="4" fill="none" stroke="#9a9a9a" stroke-width="1"/><circle cx="5" cy="5" r="2.1" fill="#3d9bea"/></svg>
<span class="a t" style="top:385.50px;line-height:16px;font-size:12.5px;letter-spacing:-0.184px;color:#e2e2e2;left:30px;">Position</span>
<svg class="a" style="left:14px;top:410.5px;" width="10" height="10" viewBox="0 0 10 10"><circle cx="5" cy="5" r="4" fill="none" stroke="#7c7c7c" stroke-width="1"/></svg>
<span class="a t" style="top:407.50px;line-height:16px;font-size:12.5px;letter-spacing:-0.358px;color:#e2e2e2;left:30px;">Position Z</span>
<svg class="a" style="left:14px;top:432.5px;" width="10" height="10" viewBox="0 0 10 10"><circle cx="5" cy="5" r="4" fill="none" stroke="#7c7c7c" stroke-width="1"/></svg>
<span class="a t" style="top:429.50px;line-height:16px;font-size:12.5px;letter-spacing:-0.195px;color:#e2e2e2;left:30px;">Rotation</span>
<svg class="a" style="left:14px;top:454.5px;" width="10" height="10" viewBox="0 0 10 10"><circle cx="5" cy="5" r="4" fill="none" stroke="#7c7c7c" stroke-width="1"/></svg>
<span class="a t" style="top:451.50px;line-height:16px;font-size:12.5px;letter-spacing:-0.267px;color:#e2e2e2;left:30px;">Rotation Z</span>
<svg class="a" style="left:14px;top:476.5px;" width="10" height="10" viewBox="0 0 10 10"><circle cx="5" cy="5" r="4" fill="none" stroke="#7c7c7c" stroke-width="1"/></svg>
<span class="a t" style="top:473.50px;line-height:16px;font-size:12.5px;letter-spacing:-0.372px;color:#e2e2e2;left:30px;">Align X</span>
<svg class="a" style="left:14px;top:498.5px;" width="10" height="10" viewBox="0 0 10 10"><circle cx="5" cy="5" r="4" fill="none" stroke="#7c7c7c" stroke-width="1"/></svg>
<span class="a t" style="top:495.50px;line-height:16px;font-size:12.5px;letter-spacing:-0.340px;color:#e2e2e2;left:30px;">Align Y</span>
<svg class="a" style="left:14px;top:520.5px;" width="10" height="10" viewBox="0 0 10 10"><circle cx="5" cy="5" r="4" fill="none" stroke="#7c7c7c" stroke-width="1"/></svg>
<span class="a t" style="top:517.50px;line-height:16px;font-size:12.5px;letter-spacing:-0.684px;color:#e2e2e2;left:30px;">Use Levels</span>
<svg class="a" style="left:14px;top:542.5px;" width="10" height="10" viewBox="0 0 10 10"><circle cx="5" cy="5" r="4" fill="none" stroke="#7c7c7c" stroke-width="1"/></svg>
<span class="a t" style="top:539.50px;line-height:16px;font-size:12.5px;letter-spacing:-0.463px;color:#e2e2e2;left:30px;">Level Mode</span>
<svg class="a" style="left:14px;top:564.5px;" width="10" height="10" viewBox="0 0 10 10"><circle cx="5" cy="5" r="4" fill="none" stroke="#7c7c7c" stroke-width="1"/></svg>
<span class="a t" style="top:561.50px;line-height:16px;font-size:12.5px;letter-spacing:-0.452px;color:#e2e2e2;left:30px;">Custom Level</span>
<div class="a" style="left:177px;top:363.2px;width:94px;height:16px;background:#2a2a2a;border-radius:3px;"></div>
<span class="a t" style="top:363.80px;line-height:16px;font-size:11.5px;letter-spacing:-0.276px;color:#5e5e5e;left:180.5px;">%</span>
<span class="a t" style="top:363.80px;line-height:16px;font-size:12.5px;letter-spacing:-0.256px;color:#e2e2e2;left:194px;">100.0</span>
<div class="a" style="left:177px;top:385.2px;width:94px;height:16px;background:#2a2a2a;border-radius:3px;"></div>
<span class="a t" style="top:385.80px;line-height:16px;font-size:12.5px;letter-spacing:-0.300px;color:#3d9bea;left:180.5px;">X</span>
<span class="a t" style="top:385.80px;line-height:16px;font-size:12.5px;letter-spacing:-0.169px;color:#c9aa62;left:194px;">-360.213</span>
<div class="a" style="left:277px;top:385.2px;width:94px;height:16px;background:#2a2a2a;border-radius:3px;"></div>
<span class="a t" style="top:385.80px;line-height:16px;font-size:12.5px;letter-spacing:-0.300px;color:#3d9bea;left:280.5px;">Y</span>
<span class="a t" style="top:385.80px;line-height:16px;font-size:12.5px;letter-spacing:-0.292px;color:#e2e2e2;left:294px;">0.0</span>
<div class="a" style="left:177px;top:407.2px;width:94px;height:16px;background:#2a2a2a;border-radius:3px;"></div>
<span class="a t" style="top:407.80px;line-height:16px;font-size:12.5px;letter-spacing:-0.300px;color:#5e5e5e;left:180.5px;">Z</span>
<span class="a t" style="top:407.80px;line-height:16px;font-size:12.5px;letter-spacing:-0.241px;color:#c9aa62;left:194px;">106.045</span>
<div class="a" style="left:177px;top:429.2px;width:94px;height:16px;background:#2a2a2a;border-radius:3px;"></div>
<span class="a t" style="top:429.80px;line-height:16px;font-size:12.5px;letter-spacing:-0.300px;color:#5e5e5e;left:180.5px;">X</span>
<span class="a t" style="top:429.80px;line-height:16px;font-size:12.5px;letter-spacing:-0.292px;color:#e2e2e2;left:194px;">0.0</span>
<div class="a" style="left:277px;top:429.2px;width:94px;height:16px;background:#2a2a2a;border-radius:3px;"></div>
<span class="a t" style="top:429.80px;line-height:16px;font-size:12.5px;letter-spacing:-0.300px;color:#5e5e5e;left:280.5px;">Y</span>
<span class="a t" style="top:429.80px;line-height:16px;font-size:12.5px;letter-spacing:-0.292px;color:#e2e2e2;left:294px;">0.0</span>
<div class="a" style="left:177px;top:451.2px;width:94px;height:16px;background:#2a2a2a;border-radius:3px;"></div>
<span class="a t" style="top:451.80px;line-height:16px;font-size:12.5px;letter-spacing:-0.300px;color:#5e5e5e;left:180.5px;">Z</span>
<span class="a t" style="top:451.80px;line-height:16px;font-size:12.5px;letter-spacing:-0.292px;color:#e2e2e2;left:194px;">0.0</span>
<div class="a" style="left:177px;top:561.2px;width:94px;height:16px;background:#2a2a2a;border-radius:3px;"></div>
<span class="a t" style="top:561.80px;line-height:16px;font-size:11.5px;letter-spacing:-0.276px;color:#5e5e5e;left:180.5px;">#</span>
<span class="a t" style="top:561.80px;line-height:16px;font-size:12.5px;letter-spacing:-1.452px;color:#e2e2e2;left:194px;">1</span>
<div class="a" style="left:260px;top:385.5px;width:11px;height:16px;background:#333;border-radius:0 3px 3px 0;"></div>
<svg class="a" style="left:250px;top:389.5px;" width="8" height="8" viewBox="0 0 8 8"><path d="M0.6 4 L3 0.8 H6.4 V7.2 H3 Z" fill="#dcb95d"/></svg>
<svg class="a" style="left:262.5px;top:389.5px;" width="7" height="8" viewBox="0 0 7 8"><path d="M0.5 0.8 H2.6 L6.2 4 L2.6 7.2 H0.5 Z" fill="#6e6e6e"/></svg>
<div class="a" style="left:260px;top:407.5px;width:11px;height:16px;background:#333;border-radius:0 3px 3px 0;"></div>
<svg class="a" style="left:250px;top:411.5px;" width="8" height="8" viewBox="0 0 8 8"><path d="M0.6 4 L3 0.8 H6.4 V7.2 H3 Z" fill="#dcb95d"/></svg>
<svg class="a" style="left:262.5px;top:411.5px;" width="7" height="8" viewBox="0 0 7 8"><path d="M0.5 0.8 H2.6 L6.2 4 L2.6 7.2 H0.5 Z" fill="#6e6e6e"/></svg>
<div class="a" style="left:361px;top:385.5px;width:10px;height:16px;background:#333;border-radius:0 3px 3px 0;"></div>
<svg class="a" style="left:349px;top:389.5px;" width="8" height="8" viewBox="0 0 8 8"><path d="M4 0.8 L7.2 4 L4 7.2 L0.8 4 Z" fill="none" stroke="#d9d9d9" stroke-width="1.2"/></svg>
<svg class="a" style="left:363px;top:389.5px;" width="7" height="8" viewBox="0 0 7 8"><path d="M0.5 0.8 H2.6 L6.2 4 L2.6 7.2 H0.5 Z" fill="#6e6e6e"/></svg>
<div class="a" style="left:310.7px;top:387.5px;width:1px;height:12px;background:#f0f0f0;"></div>
<div class="a" style="left:269px;top:375px;width:125px;height:36px;border:3px solid #b7e51e;"></div>
<div class="a" style="left:330px;top:411px;width:47.5px;height:14.5px;background:#2b2b2b;border-radius:2px;box-shadow:1px 2px 3px rgba(0,0,0,.55);"></div>
<span class="a t" style="top:409.60px;line-height:16px;font-size:12.5px;letter-spacing:-0.246px;color:#dcdcdc;left:332.5px;">Position</span>
<div class="a" style="left:177px;top:478.9px;width:194px;height:4px;background:#585858;border-radius:2px;"></div>
<div class="a" style="left:177px;top:478.9px;width:97px;height:4px;background:#e4e4e4;border-radius:2px;"></div>
<svg class="a" style="left:268.5px;top:475.4px;" width="11" height="11" viewBox="0 0 11 11"><circle cx="5.5" cy="5.5" r="5.2" fill="#80d3b4"/><circle cx="5.5" cy="5.5" r="2" fill="#5fa88c"/></svg>
<div class="a" style="left:377px;top:473.5px;width:94px;height:16px;background:#2a2a2a;border-radius:3px;"></div>
<span class="a t" style="top:473.80px;line-height:16px;font-size:11.5px;letter-spacing:-0.276px;color:#5e5e5e;left:380.5px;">#</span>
<span class="a t" style="top:473.80px;line-height:16px;font-size:12.5px;letter-spacing:-0.292px;color:#e2e2e2;left:394px;">0.0</span>
<div class="a" style="left:177px;top:500.9px;width:194px;height:4px;background:#585858;border-radius:2px;"></div>
<div class="a" style="left:177px;top:500.9px;width:97px;height:4px;background:#e4e4e4;border-radius:2px;"></div>
<svg class="a" style="left:268.5px;top:497.4px;" width="11" height="11" viewBox="0 0 11 11"><circle cx="5.5" cy="5.5" r="5.2" fill="#80d3b4"/><circle cx="5.5" cy="5.5" r="2" fill="#5fa88c"/></svg>
<div class="a" style="left:377px;top:495.5px;width:94px;height:16px;background:#2a2a2a;border-radius:3px;"></div>
<span class="a t" style="top:495.80px;line-height:16px;font-size:11.5px;letter-spacing:-0.276px;color:#5e5e5e;left:380.5px;">#</span>
<span class="a t" style="top:495.80px;line-height:16px;font-size:12.5px;letter-spacing:-0.292px;color:#e2e2e2;left:394px;">0.0</span>
<div class="a" style="left:177px;top:517px;width:16px;height:16px;background:#2a2a2a;border-radius:3px;"></div>
<svg class="a" style="left:177px;top:517px;" width="16" height="16" viewBox="0 0 16 16"><path d="M3 8.6 L6.3 11.8 L13 3.8" fill="none" stroke="#2fd06a" stroke-width="2.1" stroke-linecap="round" stroke-linejoin="round"/></svg>
<div class="a" style="left:178px;top:540px;width:192px;height:14px;background:#4e4e4e;border-radius:2px;"></div>
<span class="a t" style="top:539.50px;line-height:16px;font-size:12.5px;letter-spacing:-0.609px;color:#e2e2e2;left:180px;">Custom...</span>
<svg class="a" style="left:357px;top:544px;" width="10" height="7" viewBox="0 0 10 7"><path d="M1 1 L5 5 L9 1" fill="none" stroke="#cfcfcf" stroke-width="1.1"/></svg>
<div class="a" style="left:494px;top:85px;width:30px;height:495px;background:#3a3a3a;"></div>
<div class="a" style="left:494px;top:95px;width:30px;height:485px;background:#444444;"></div>
<div class="a" style="left:494px;top:94.5px;width:30px;height:0.8px;background:#4a4a4a;"></div>
<div class="a" style="left:502.8px;top:88.8px;width:2.2px;height:2.2px;background:#8f8f8f;"></div>
<div class="a" style="left:507.8px;top:88.8px;width:2.2px;height:2.2px;background:#8f8f8f;"></div>
<div class="a" style="left:512.8px;top:88.8px;width:2.2px;height:2.2px;background:#8f8f8f;"></div>
<div class="a" style="left:495.2px;top:96px;width:27.6px;height:28px;background:#111111;border-radius:4px;"></div>
<svg class="a" style="left:0;top:0" width="0" height="0"><defs><linearGradient id="tg" x1="0" y1="0" x2="0" y2="1"><stop offset="0" stop-color="#ffffff"/><stop offset="1" stop-color="#c4c4c4"/></linearGradient></defs></svg>
<svg class="a" style="left:497px;top:97.2px;" width="24" height="24" viewBox="0 0 24 24"><path d="M7.2 2.3 V17.6 L10.8 14.4 L13.2 19.8 L15.8 18.6 L13.4 13.4 L18.6 13 Z" fill="none" stroke="#2fd06a" stroke-width="1.25" stroke-linejoin="round"/></svg>
<svg class="a" style="left:497px;top:128px;" width="24" height="24" viewBox="0 0 24 24"><path d="M7 1.8 L21.2 13.4 L13.2 14.6 L7 21.4 Z" fill="url(#tg)"/></svg>
<svg class="a" style="left:497px;top:158px;" width="24" height="24" viewBox="0 0 24 24"><path d="M4.5 3 L13.5 6.2 L17.6 13.8 L14 17.4 L6.4 13.2 Z M16.2 16.6 L18.8 14 L21 16.2 L18.4 18.8 Z" fill="url(#tg)"/><path d="M4.5 3 L11 10" stroke="#444444" stroke-width="1"/><circle cx="11.4" cy="10.4" r="1.4" fill="#444444"/></svg>
<svg class="a" style="left:497px;top:188px;" width="24" height="24" viewBox="0 0 24 24"><path d="M3.5 20.5 L4.6 16.6 L16.4 4.8 L19.4 7.8 L7.6 19.6 Z" fill="url(#tg)"/><path d="M17.4 3.8 a2 2 0 0 1 3 3 L19.9 7.3 L16.9 4.3 Z" fill="url(#tg)"/><path d="M3.5 20.5 L4.3 17.8 L6.3 19.8 Z" fill="#777"/></svg>
<svg class="a" style="left:497px;top:218px;" width="24" height="24" viewBox="0 0 24 24"><path d="M2.6 8.4 a1.5 1.5 0 0 1 1.5 -1.5 H14.6 a1.5 1.5 0 0 1 1.5 1.5 V16.6 a1.5 1.5 0 0 1 -1.5 1.5 H4.1 a1.5 1.5 0 0 1 -1.5 -1.5 Z M16.8 11 L22 7.6 V17.6 L16.8 14.2 Z" fill="url(#tg)"/><rect x="5" y="5" width="6.5" height="1.3" fill="url(#tg)"/><circle cx="5.8" cy="10" r="1.2" fill="#444444"/></svg>
<svg class="a" style="left:497px;top:248px;" width="24" height="24" viewBox="0 0 24 24"><path d="M4 20 L20 4.2" stroke="#d9d9d9" stroke-width="1.1"/></svg>
<svg class="a" style="left:497px;top:278px;" width="24" height="24" viewBox="0 0 24 24"><path d="M4.8 3.6 H19.2 V6.8 H13.7 V19.6 H10.3 V6.8 H4.8 Z" fill="url(#tg)"/></svg>
<svg class="a" style="left:497px;top:308px;" width="24" height="24" viewBox="0 0 24 24"><path d="M4.4 3.8 L12.6 9.2 L7.6 9.8 L4.4 13.6 Z" fill="url(#tg)"/><path d="M13 4.6 H17.6 M18.6 6 L20.4 18.6 M5 19.8 H19 M4.8 18 L5.6 15" fill="none" stroke="#e6e6e6" stroke-width="1.1" stroke-dasharray="3.2 1.8"/><path d="M17.6 3.6h2v2h-2z M19.4 18.8h2v2h-2z M3.4 18.8h2v2h-2z" fill="#e6e6e6"/></svg>
<svg class="a" style="left:497px;top:338px;" width="24" height="24" viewBox="0 0 24 24"><rect x="5" y="5" width="14" height="14" fill="url(#tg)"/></svg>
<svg class="a" style="left:497px;top:368px;" width="24" height="24" viewBox="0 0 24 24"><circle cx="12" cy="12" r="8" fill="url(#tg)"/></svg>
<svg class="a" style="left:497px;top:397.2px;" width="24" height="24" viewBox="0 0 24 24"><path d="M12 3.4 L20.8 9.8 L17.4 19.8 H6.6 L3.2 9.8 Z" fill="url(#tg)"/></svg>
<svg class="a" style="left:497px;top:426.6px;" width="24" height="24" viewBox="0 0 24 24"><path d="M12.00 3.80 L14.12 9.69 L20.37 9.88 L15.42 13.71 L17.17 19.72 L12.00 16.20 L6.83 19.72 L8.58 13.71 L3.63 9.88 L9.88 9.69 Z" fill="url(#tg)"/></svg>
<svg class="a" style="left:497px;top:458px;" width="24" height="24" viewBox="0 0 24 24"><path d="M5 13 A7 7 0 1 1 10 18.7" fill="none" stroke="url(#tg)" stroke-width="3.2"/></svg>
<svg class="a" style="left:497px;top:488px;" width="24" height="24" viewBox="0 0 24 24"><path d="M12 3 C12.8 8.6 15.4 11.2 21 12 C15.4 12.8 12.8 15.4 12 21 C11.2 15.4 8.6 12.8 3 12 C8.6 11.2 11.2 8.6 12 3 Z" fill="url(#tg)"/></svg>
<svg class="a" style="left:499px;top:519px" width="20" height="20" viewBox="2.4 2.9 19.2 19.2"><path d="M10.4 3h3.2l.5 2.4 1.6.7 2.1-1.4 2.2 2.2-1.4 2.1.7 1.6 2.4.5v3.2l-2.4.5-.7 1.6 1.4 2.1-2.2 2.2-2.1-1.4-1.6.7-.5 2.4h-3.2l-.5-2.4-1.6-.7-2.1 1.4-2.2-2.2 1.4-2.1-.7-1.6-2.4-.5v-3.2l2.4-.5.7-1.6-1.4-2.1 2.2-2.2 2.1 1.4 1.6-.7z" fill="url(#tg)" transform="translate(0,.5)"/><circle cx="12" cy="12.5" r="3.3" fill="#444444"/></svg>
<svg class="a" style="left:502px;top:564px;" width="14" height="12" viewBox="0 0 14 12"><path d="M1.5 1 L6.5 6 L1.5 11 M7.5 1 L12.5 6 L7.5 11" fill="none" stroke="#a8a8a8" stroke-width="1.3"/></svg>
<div class="a" style="left:530px;top:85px;width:87px;height:23px;background:#454545;border-radius:5px 5px 0 0;"></div>
<span class="a t" style="top:88.50px;line-height:16px;font-size:12.5px;letter-spacing:-0.262px;color:#e2e2e2;left:535px;">Composition 3</span>
<div class="a" style="left:530px;top:107px;width:1057px;height:451px;background:#000;"></div>
<span class="a t" style="top:459.50px;line-height:16px;font-size:12px;letter-spacing:-0.370px;color:#f4f4f4;left:569.8px;-webkit-text-stroke:0.4px #f4f4f4;">Hold S</span>
<span class="a t" style="top:473.50px;line-height:16px;font-size:12px;letter-spacing:-0.745px;color:#f4f4f4;left:569.8px;-webkit-text-stroke:0.4px #f4f4f4;">Space</span>
<span class="a t" style="top:487.50px;line-height:16px;font-size:12px;letter-spacing:-0.376px;color:#f4f4f4;left:569.8px;-webkit-text-stroke:0.4px #f4f4f4;">Space + click + drag</span>
<span class="a t" style="top:501.50px;line-height:16px;font-size:12px;letter-spacing:-0.161px;color:#f4f4f4;left:569.8px;-webkit-text-stroke:0.4px #f4f4f4;">Alt + click + drag</span>
<span class="a t" style="top:515.50px;line-height:16px;font-size:12px;letter-spacing:-0.002px;color:#f4f4f4;left:569.8px;-webkit-text-stroke:0.4px #f4f4f4;">Shift</span>
<span class="a t" style="top:459.50px;line-height:16px;font-size:12px;letter-spacing:-0.086px;color:#505050;left:605.5px;">Direct Layer Selection</span>
<span class="a t" style="top:473.50px;line-height:16px;font-size:12px;letter-spacing:-0.150px;color:#505050;left:603px;">Play/ Stop</span>
<span class="a t" style="top:487.50px;line-height:16px;font-size:12px;letter-spacing:-0.284px;color:#505050;left:674px;">Pan</span>
<span class="a t" style="top:501.50px;line-height:16px;font-size:12px;letter-spacing:0.016px;color:#505050;left:658.5px;">Move Pivot Point</span>
<span class="a t" style="top:515.50px;line-height:16px;font-size:12px;letter-spacing:-0.394px;color:#505050;left:597px;">Enable Snapping</span>
<div class="a" style="left:693.4px;top:127px;width:729.2px;height:410px;background:#00aeff;overflow:hidden;">
<span class="a t" style="top:332.50px;line-height:16px;font-size:12px;letter-spacing:-0.086px;color:#4a72c8;left:-87.89999999999998px;">Direct Layer Selection</span>
<span class="a t" style="top:346.50px;line-height:16px;font-size:12px;letter-spacing:-0.150px;color:#4a72c8;left:-90.39999999999998px;">Play/ Stop</span>
<span class="a t" style="top:360.50px;line-height:16px;font-size:12px;letter-spacing:-0.284px;color:#4a72c8;left:-19.399999999999977px;">Pan</span>
<span class="a t" style="top:374.50px;line-height:16px;font-size:12px;letter-spacing:0.016px;color:#4a72c8;left:-34.89999999999998px;">Move Pivot Point</span>
<span class="a t" style="top:388.50px;line-height:16px;font-size:12px;letter-spacing:-0.394px;color:#4a72c8;left:-96.39999999999998px;">Enable Snapping</span>
<div class="a" style="left:210.6px;top:166.4px;width:76.6px;height:76.6px;border-radius:50%;background:#8c52ff;"></div>
<div class="a" style="left:224.3px;top:160.3px;width:90.0px;height:90.0px;border-radius:50%;background:#4fa3ff;"></div>
<div class="a" style="left:468.6px;top:175.0px;width:58.0px;height:58.0px;border-radius:50%;background:#fd4fbf;"></div>
<div class="a" style="left:436.9px;top:162.0px;width:86.0px;height:86.0px;border-radius:50%;background:#8c52ff;"></div>
<div class="a" style="left:301.8px;top:178.2px;width:53.6px;height:53.6px;border-radius:50%;background:#ff565a;"></div>
<div class="a" style="left:234.9px;top:158.2px;width:93.6px;height:93.6px;border-radius:50%;background:#4fffb4;"></div>
<div class="a" style="left:326.1px;top:154.2px;width:101.6px;height:101.6px;border-radius:50%;background:#ff4f5e;"></div>
<div class="a" style="left:423.2px;top:159.4px;width:91.2px;height:91.2px;border-radius:50%;background:#fd4fbf;"></div>
<span class="a t" style="left:280.20000000000005px;top:189.60000000000002px;line-height:32px;font-size:27.3px;color:#fff;transform:translateX(-50%);letter-spacing:1.02px;-webkit-text-stroke:0.5px #fff;">4</span>
<span class="a t" style="left:375.6px;top:189.60000000000002px;line-height:32px;font-size:27.3px;color:#fff;transform:translateX(-50%);letter-spacing:1.82px;-webkit-text-stroke:0.5px #fff;">8</span>
<span class="a t" style="left:470.4px;top:189.60000000000002px;line-height:32px;font-size:27.3px;color:#fff;transform:translateX(-50%);letter-spacing:-2.28px;-webkit-text-stroke:0.5px #fff;">12</span>
</div>
<span class="a t" style="top:535.50px;line-height:16px;font-size:12.5px;letter-spacing:-0.134px;color:#f0f0f0;left:998px;">Viewport Quality: High</span>
<div class="a" style="left:530px;top:558px;width:1057px;height:22px;background:#464646;"></div>
<div class="a" style="left:535.5px;top:561px;width:77px;height:15.5px;background:#2a2a2a;border-radius:3px;"></div>
<span class="a t" style="top:561.00px;line-height:16px;font-size:12.5px;letter-spacing:-0.506px;color:#e2e2e2;left:538.5px;">38%</span>
<svg class="a" style="left:599px;top:566px;" width="10" height="7" viewBox="0 0 10 7"><path d="M1 1 L5 5 L9 1" fill="none" stroke="#cfcfcf" stroke-width="1.2"/></svg>
<div class="a" style="left:866px;top:559.5px;width:100px;height:19px;background:#2a2a2a;border-radius:4px;box-shadow:0 0 0 0.5px #3a3a3a;"></div>
<div class="a" style="left:885.5px;top:560px;width:1px;height:18px;background:#3c3c3c;"></div>
<div class="a" style="left:905.5px;top:560px;width:1px;height:18px;background:#3c3c3c;"></div>
<div class="a" style="left:925.5px;top:560px;width:1px;height:18px;background:#3c3c3c;"></div>
<div class="a" style="left:945.5px;top:560px;width:1px;height:18px;background:#3c3c3c;"></div>
<svg class="a" style="left:866px;top:559.5px;" width="20" height="19" viewBox="0 0 20 19"><path d="M5 4.5 V14.5" stroke="#dedede" stroke-width="1.7"/><path d="M14.6 4.3 V14.7 L6.6 9.5 Z" fill="#dedede"/></svg>
<svg class="a" style="left:886px;top:559.5px;" width="20" height="19" viewBox="0 0 20 19"><path d="M14.6 4.5 V14.5" stroke="#dedede" stroke-width="1.7"/><path d="M12 4.3 V14.7 L4 9.5 Z" fill="#dedede"/></svg>
<svg class="a" style="left:906px;top:559.5px;" width="20" height="19" viewBox="0 0 20 19"><path d="M5.6 4 V15 L14.6 9.5 Z" fill="#dedede"/></svg>
<svg class="a" style="left:926px;top:559.5px;" width="20" height="19" viewBox="0 0 20 19"><path d="M5.4 4.5 V14.5" stroke="#dedede" stroke-width="1.7"/><path d="M8 4.3 V14.7 L16 9.5 Z" fill="#dedede"/></svg>
<svg class="a" style="left:946px;top:559.5px;" width="20" height="19" viewBox="0 0 20 19"><path d="M15 4.5 V14.5" stroke="#dedede" stroke-width="1.7"/><path d="M5.4 4.3 V14.7 L13.4 9.5 Z" fill="#dedede"/></svg>
<div class="a" style="left:971px;top:559.5px;width:19.5px;height:19px;background:#2a2a2a;border-radius:4px;box-shadow:0 0 0 0.5px #3a3a3a;"></div>
<svg class="a" style="left:971px;top:559.5px;" width="20" height="19" viewBox="0 0 20 19"><path d="M9 6.4 H4.6 a1 1 0 0 0 -1 1 V13.4 a1 1 0 0 0 1 1 H15.4 a1 1 0 0 0 1 -1 V7.4 a1 1 0 0 0 -1 -1 H14.6" fill="none" stroke="#dedede" stroke-width="1.4"/><path d="M9.6 3.2 L14.2 6.4 L9.6 9.6 Z" fill="#dedede"/></svg>
<div class="a" style="left:1232px;top:559.5px;width:37px;height:19px;background:#2a2a2a;border-radius:4px;box-shadow:0 0 0 0.5px #363636;"></div>
<svg class="a" style="left:1234.5px;top:564.5px;" width="15" height="9" viewBox="0 0 15 9"><path d="M0.5 4.5 L4.2 0.6 H13 a1 1 0 0 1 1 1 V7.4 a1 1 0 0 1 -1 1 H4.2 Z" fill="#d9d9d9"/><circle cx="4.6" cy="4.5" r="1.3" fill="#2b2b2b"/></svg>
<span class="a t" style="top:561.30px;line-height:16px;font-size:12.5px;letter-spacing:-0.300px;color:#7f8fa3;left:1257.5px;">0</span>
<div class="a" style="left:1272.5px;top:559.5px;width:30.5px;height:19px;background:#2a2a2a;border-radius:4px;box-shadow:0 0 0 0.5px #363636;"></div>
<div class="a" style="left:1291px;top:559.5px;width:12px;height:19px;background:#404040;border-radius:0 4px 4px 0;"></div>
<svg class="a" style="left:1294px;top:565px;" width="7" height="8" viewBox="0 0 7 8"><path d="M1 1 L5.6 4 L1 7 Z" fill="none" stroke="#8f8f8f" stroke-width="0.9"/></svg>
<svg class="a" style="left:1275.5px;top:562.5px;" width="14" height="13" viewBox="0 0 14 13"><path d="M0.8 4.4 H3.4 L7.2 1 V12 L3.4 8.6 H0.8 Z" fill="#2fd06a"/><path d="M9 3.8 A3.6 3.6 0 0 1 9 9.2 M10.8 1.8 A6.2 6.2 0 0 1 10.8 11.2" fill="none" stroke="#2fd06a" stroke-width="1.2"/></svg>
<div class="a" style="left:1307.5px;top:559.5px;width:30.5px;height:19px;background:#2a2a2a;border-radius:4px;box-shadow:0 0 0 0.5px #363636;"></div>
<div class="a" style="left:1307.5px;top:559.5px;width:18.5px;height:19px;background:#4d4d4d;border-radius:4px 0 0 4px;"></div>
<div class="a" style="left:1326px;top:559.5px;width:12px;height:19px;background:#404040;border-radius:0 4px 4px 0;"></div>
<svg class="a" style="left:1329px;top:565px;" width="7" height="8" viewBox="0 0 7 8"><path d="M1 1 L5.6 4 L1 7 Z" fill="none" stroke="#8f8f8f" stroke-width="0.9"/></svg>
<svg class="a" style="left:1310px;top:562px;" width="14" height="14" viewBox="0 0 14 14"><g transform="translate(14,0) scale(-1,1)"><path d="M10.8 8.6 L6.4 4.2 A3 3 0 0 0 2.2 8.4 L6 12.2" fill="none" stroke="#e6e6e6" stroke-width="2.6"/></g></svg>
<div class="a" style="left:1342.5px;top:559.5px;width:30.5px;height:19px;background:#2a2a2a;border-radius:4px;box-shadow:0 0 0 0.5px #363636;"></div>
<div class="a" style="left:1342.5px;top:559.5px;width:18.5px;height:19px;background:#4d4d4d;border-radius:4px 0 0 4px;"></div>
<div class="a" style="left:1361px;top:559.5px;width:12px;height:19px;background:#404040;border-radius:0 4px 4px 0;"></div>
<svg class="a" style="left:1364px;top:565px;" width="7" height="8" viewBox="0 0 7 8"><path d="M1 1 L5.6 4 L1 7 Z" fill="none" stroke="#8f8f8f" stroke-width="0.9"/></svg>
<svg class="a" style="left:1345px;top:562px;" width="14" height="14" viewBox="0 0 14 14"><path d="M4.6 0.5 V13.5 M9.4 0.5 V13.5 M0.5 4.6 H13.5 M0.5 9.4 H13.5" stroke="#e6e6e6" stroke-width="1.1"/></svg>
<div class="a" style="left:1377.5px;top:559.5px;width:19.5px;height:19px;background:#2a2a2a;border-radius:4px;box-shadow:0 0 0 0.5px #363636;"></div>
<svg class="a" style="left:1380px;top:562.5px;" width="15" height="13" viewBox="0 0 15 13"><rect x="0.5" y="0.5" width="3.4" height="4.4" fill="#2fd06a"/><rect x="5.6" y="1" width="8.6" height="4.6" fill="none" stroke="#2fd06a" stroke-width="1.4"/><rect x="0.5" y="7.6" width="3.4" height="5" fill="#2fd06a"/><rect x="5" y="7.6" width="9.8" height="5" fill="#2fd06a"/></svg>
<div class="a" style="left:1400.5px;top:559.5px;width:19.5px;height:19px;background:#2a2a2a;border-radius:4px;box-shadow:0 0 0 0.5px #363636;"></div>
<svg class="a" style="left:1403px;top:564px;" width="15" height="10" viewBox="0 0 15 10"><path d="M0.8 0.8 L4.6 5 L0.8 9.2 M5.4 0.8 L9.2 5 L5.4 9.2 M10 0.8 L13.8 5 L10 9.2" fill="none" stroke="#d9d9d9" stroke-width="1.5"/></svg>
<div class="a" style="left:1424px;top:559.5px;width:30.5px;height:19px;background:#2a2a2a;border-radius:4px;box-shadow:0 0 0 0.5px #363636;"></div>
<div class="a" style="left:1424px;top:559.5px;width:18.5px;height:19px;background:#4d4d4d;border-radius:4px 0 0 4px;"></div>
<div class="a" style="left:1442.5px;top:559.5px;width:12px;height:19px;background:#404040;border-radius:0 4px 4px 0;"></div>
<svg class="a" style="left:1445.5px;top:565px;" width="7" height="8" viewBox="0 0 7 8"><path d="M1 1 L5.6 4 L1 7 Z" fill="none" stroke="#8f8f8f" stroke-width="0.9"/></svg>
<svg class="a" style="left:1426px;top:563px;" width="15" height="12" viewBox="0 0 15 12"><rect x="0.7" y="0.7" width="13.2" height="9" fill="none" stroke="#e6e6e6" stroke-width="1.3"/><rect x="0" y="10.2" width="14.6" height="1.6" fill="#c4c4c4"/></svg>
<div class="a" style="left:1458.5px;top:559.5px;width:30.5px;height:19px;background:#2a2a2a;border-radius:4px;box-shadow:0 0 0 0.5px #363636;"></div>
<div class="a" style="left:1458.5px;top:559.5px;width:18.5px;height:19px;background:#4d4d4d;border-radius:4px 0 0 4px;"></div>
<div class="a" style="left:1477px;top:559.5px;width:12px;height:19px;background:#404040;border-radius:0 4px 4px 0;"></div>
<svg class="a" style="left:1480px;top:565px;" width="7" height="8" viewBox="0 0 7 8"><path d="M1 1 L5.6 4 L1 7 Z" fill="none" stroke="#8f8f8f" stroke-width="0.9"/></svg>
<svg class="a" style="left:1460.5px;top:562.5px;" width="15" height="13" viewBox="0 0 15 13"><rect x="0.6" y="0.6" width="8" height="5.6" fill="none" stroke="#c9c9c9" stroke-width="1"/><path d="M10.6 3.2 V8.4 H3 M12.6 5.4 V10.6 H5 M14.4 7.6 V12.6 H7" fill="none" stroke="#a9a9a9" stroke-width="1"/></svg>
<div class="a" style="left:1493px;top:559.5px;width:31px;height:19px;background:#2a2a2a;border-radius:4px;box-shadow:0 0 0 0.5px #363636;"></div>
<div class="a" style="left:1493px;top:559.5px;width:19px;height:19px;background:#4d4d4d;border-radius:4px 0 0 4px;"></div>
<div class="a" style="left:1512px;top:559.5px;width:12px;height:19px;background:#404040;border-radius:0 4px 4px 0;"></div>
<svg class="a" style="left:1515px;top:565px;" width="7" height="8" viewBox="0 0 7 8"><path d="M1 1 L5.6 4 L1 7 Z" fill="none" stroke="#8f8f8f" stroke-width="0.9"/></svg>
<svg class="a" style="left:1495.5px;top:562px;" width="15" height="15" viewBox="0 0 15 15"><rect x="0.5" y="0.5" width="9" height="9" fill="#bdbdbd"/><rect x="5.2" y="5.2" width="8.6" height="8.6" fill="#4d4d4d" stroke="#e6e6e6" stroke-width="1.2"/></svg>
<div class="a" style="left:1528.5px;top:559.5px;width:30.5px;height:19px;background:#2a2a2a;border-radius:4px;box-shadow:0 0 0 0.5px #363636;"></div>
<div class="a" style="left:1547px;top:559.5px;width:12px;height:19px;background:#404040;border-radius:0 4px 4px 0;"></div>
<svg class="a" style="left:1550px;top:565px;" width="7" height="8" viewBox="0 0 7 8"><path d="M1 1 L5.6 4 L1 7 Z" fill="none" stroke="#8f8f8f" stroke-width="0.9"/></svg>
<svg class="a" style="left:1531px;top:562.5px;" width="14" height="14" viewBox="0 0 14 14"><rect x="0.5" y="0.5" width="2.6" height="2.6" fill="#2fd06a"/><rect x="0.5" y="5.7" width="2.6" height="2.6" fill="#2fd06a"/><rect x="0.5" y="10.9" width="2.6" height="2.6" fill="#2fd06a"/><rect x="3.1" y="3.1" width="2.6" height="2.6" fill="#2fd06a"/><rect x="3.1" y="8.3" width="2.6" height="2.6" fill="#2fd06a"/><rect x="5.7" y="0.5" width="2.6" height="2.6" fill="#2fd06a"/><rect x="5.7" y="5.7" width="2.6" height="2.6" fill="#2fd06a"/><rect x="5.7" y="10.9" width="2.6" height="2.6" fill="#2fd06a"/><rect x="8.3" y="3.1" width="2.6" height="2.6" fill="#2fd06a"/><rect x="8.3" y="8.3" width="2.6" height="2.6" fill="#2fd06a"/><rect x="10.9" y="0.5" width="2.6" height="2.6" fill="#2fd06a"/><rect x="10.9" y="5.7" width="2.6" height="2.6" fill="#2fd06a"/><rect x="10.9" y="10.9" width="2.6" height="2.6" fill="#2fd06a"/></svg>
<div class="a" style="left:1563.5px;top:559.5px;width:19px;height:19px;background:#2a2a2a;border-radius:4px;box-shadow:0 0 0 0.5px #363636;"></div>
<svg class="a" style="left:1566px;top:562px" width="14" height="14" viewBox="2.4 2.9 19.2 19.2"><path d="M10.4 3h3.2l.5 2.4 1.6.7 2.1-1.4 2.2 2.2-1.4 2.1.7 1.6 2.4.5v3.2l-2.4.5-.7 1.6 1.4 2.1-2.2 2.2-2.1-1.4-1.6.7-.5 2.4h-3.2l-.5-2.4-1.6-.7-2.1 1.4-2.2-2.2 1.4-2.1-.7-1.6-2.4-.5v-3.2l2.4-.5.7-1.6-1.4-2.1 2.2-2.2 2.1 1.4 1.6-.7z" fill="#e6e6e6" transform="translate(0,.5)"/><circle cx="12" cy="12.5" r="3.3" fill="#2b2b2b"/></svg>
<div class="a" style="left:1593px;top:85px;width:40px;height:23px;background:#454545;border-radius:5px 5px 0 0;"></div>
<span class="a t" style="top:88.50px;line-height:16px;font-size:12.5px;letter-spacing:-0.074px;color:#e2e2e2;left:1598px;">Color</span>
<div class="a" style="left:1634.5px;top:85.5px;width:68.5px;height:21.5px;background:#252525;border-radius:5px 5px 0 0;"></div>
<span class="a t" style="top:88.50px;line-height:16px;font-size:12.5px;letter-spacing:-0.523px;color:#e2e2e2;left:1639.5px;">Add Layers</span>
<div class="a" style="left:1593px;top:107px;width:321px;height:377px;background:#454545;"></div>
<div class="a" style="left:1900px;top:107px;width:14px;height:377px;background:#2a2a2a;"></div>
<div class="a" style="left:1902px;top:153px;width:10px;height:303px;background:#4f4f4f;border-radius:5px;"></div>
<div class="a" style="left:1593px;top:107px;width:307px;height:200px;overflow:hidden;">
<div class="a" style="left:53px;top:-47px;width:200px;height:200px;border-radius:50%;background:conic-gradient(from 90deg,#ff0000,#ff00ff,#0000ff,#00ffff,#00ff00,#ffff00,#ff0000);-webkit-mask:radial-gradient(circle,transparent 74.6px,#000 75.4px,#000 99.6px,transparent 100.4px);mask:radial-gradient(circle,transparent 74.6px,#000 75.4px,#000 99.6px,transparent 100.4px);"></div>
<div class="a" style="left:109px;top:9px;width:90px;height:90px;background:linear-gradient(to right,#000,rgba(0,0,0,0)),linear-gradient(to bottom,#fff,#ff00a4);"></div>
</div>
<svg class="a" style="left:1785px;top:171.5px;" width="13" height="13" viewBox="0 0 13 13"><circle cx="6.5" cy="6.5" r="5.5" fill="none" stroke="#f2f2f2" stroke-width="1"/></svg>
<svg class="a" style="left:1807.3px;top:208.2px;" width="13" height="13" viewBox="0 0 13 13"><circle cx="6.5" cy="6.5" r="5.5" fill="none" stroke="#f2f2f2" stroke-width="1"/></svg>
<div class="a" style="left:1600px;top:273px;width:22px;height:22px;background:#fd4fbf;border-radius:3px;"></div>
<span class="a t" style="top:277.00px;line-height:16px;font-size:12.5px;letter-spacing:-0.218px;color:#e2e2e2;left:1625.5px;">Hot Pink</span>
<div class="a" style="left:1871.5px;top:273px;width:21.5px;height:22px;background:#2a2a2a;border-radius:4px;box-shadow:0 0 0 0.5px #333;"></div>
<svg class="a" style="left:1875.5px;top:277px;" width="14" height="14" viewBox="0 0 14 14"><path d="M1.5 12.5 L2 10.6 L7.6 5 L9 6.4 L3.4 12 Z" fill="none" stroke="#d0d0d0" stroke-width="1"/><path d="M7.2 3.6 L10.4 6.8 M8 5.2 L10.6 2.2 a1.4 1.4 0 0 1 2 2 L9.8 6.6 Z" fill="#d0d0d0" stroke="#d0d0d0" stroke-width="1.2" stroke-linejoin="round"/></svg>
<div class="a" style="left:1600px;top:300.5px;width:49.5px;height:17px;background:#454545;border-radius:3px;border:1px solid #5c5c5c;"></div>
<span class="a t" style="top:301.50px;line-height:16px;font-size:12.5px;letter-spacing:-0.410px;color:#e2e2e2;left:1603px;">Hex</span>
<svg class="a" style="left:1636px;top:306.5px;" width="10" height="7" viewBox="0 0 10 7"><path d="M1 1 L5 5 L9 1" fill="none" stroke="#cfcfcf" stroke-width="1.1"/></svg>
<div class="a" style="left:1653px;top:298px;width:240px;height:22px;background:#2a2a2a;border-radius:3px;"></div>
<span class="a t" style="top:301.50px;line-height:16px;font-size:11.5px;letter-spacing:-0.276px;color:#555;left:1658px;">#</span>
<span class="a t" style="top:301.50px;line-height:16px;font-size:12.5px;letter-spacing:0.121px;color:#e2e2e2;left:1670px;">fd4fbf</span>
<div class="a" style="left:1600px;top:330px;width:236px;height:4px;background:#e4e4e4;border-radius:2px;"></div>
<svg class="a" style="left:1828.5px;top:326.5px;" width="11" height="11" viewBox="0 0 11 11"><circle cx="5.5" cy="5.5" r="5.2" fill="#80d3b4"/><circle cx="5.5" cy="5.5" r="2" fill="#5fa88c"/></svg>
<div class="a" style="left:1849px;top:324.5px;width:44px;height:15.5px;background:#2a2a2a;border-radius:3px;"></div>
<span class="a t" style="top:324.80px;line-height:16px;font-size:12.5px;letter-spacing:-0.300px;color:#585858;left:1853px;">A</span>
<span class="a t" style="top:324.80px;line-height:16px;font-size:12.5px;letter-spacing:-0.119px;color:#e2e2e2;left:1866px;">255</span>
<div class="a" style="left:1597px;top:346px;width:299px;height:22px;background:#262626;border-radius:2px;"></div>
<div class="a" style="left:1599px;top:348px;width:148px;height:20px;background:#454545;border-radius:4px 4px 0 0;"></div>
<span class="a t" style="top:350.00px;line-height:16px;font-size:12.5px;letter-spacing:-0.524px;color:#e2e2e2;left:1672.5px;transform:translateX(-50%);">Swatches</span>
<span class="a t" style="top:350.00px;line-height:16px;font-size:12.5px;letter-spacing:-0.198px;color:#b5b5b5;left:1820px;transform:translateX(-50%);">Generator</span>
<div class="a" style="left:1598.5px;top:371.5px;width:256.5px;height:17.5px;background:#5a5a5a;border-radius:3px;"></div>
<div class="a" style="left:1599.5px;top:372.5px;width:61.5px;height:15.5px;background:#2a2a2a;border-radius:3px;"></div>
<svg class="a" style="left:1605px;top:375px;" width="12" height="11" viewBox="0 0 12 11"><path d="M1.2 0.5 V10.5 M4.2 0.5 V10.5" stroke="#2fd06a" stroke-width="1.6"/><path d="M6.6 0.8 L9.8 10.4" stroke="#2fd06a" stroke-width="1.6"/></svg>
<span class="a t" style="top:372.50px;line-height:16px;font-size:12.5px;letter-spacing:-0.101px;color:#e2e2e2;left:1621px;">Library</span>
<svg class="a" style="left:1670.5px;top:375px;" width="12" height="11" viewBox="0 0 12 11"><path d="M0.5 2 V1.2 a0.7 0.7 0 0 1 .7 -.7 H4.4 L5.6 2 Z" fill="#cfcfcf"/><rect x="0.5" y="2.6" width="10.6" height="7.8" rx="0.8" fill="#cfcfcf"/><path d="M2.2 5 H3.4 M4.4 5 H9.4 M2.2 7.6 H3.4 M4.4 7.6 H9.4" stroke="#5a5a5a" stroke-width="1"/></svg>
<span class="a t" style="top:372.50px;line-height:16px;font-size:12.5px;letter-spacing:-0.129px;color:#e2e2e2;left:1686px;">Project</span>
<svg class="a" style="left:1737.5px;top:374.5px;" width="10" height="12" viewBox="0 0 10 12"><path d="M0.8 0.8 H5.8 L8.6 3.6 V11 H0.8 Z" fill="none" stroke="#cfcfcf" stroke-width="1.1"/><path d="M5.6 0.8 V3.8 H8.6" fill="none" stroke="#cfcfcf" stroke-width="0.9"/></svg>
<span class="a t" style="top:372.50px;line-height:16px;font-size:12.5px;letter-spacing:-0.789px;color:#e2e2e2;left:1751.5px;">Scene</span>
<svg class="a" style="left:1800.5px;top:375px;" width="12" height="11" viewBox="0 0 12 11"><path d="M2.6 0.7 H8.8 a2 2 0 0 1 2 2 V5.4 L6.4 10.2 H2.6 a2 2 0 0 1 -2 -2 V2.7 a2 2 0 0 1 2 -2 Z" fill="none" stroke="#cfcfcf" stroke-width="1.1"/><path d="M10.6 5.4 H8 a1.6 1.6 0 0 0 -1.6 1.6 V10" fill="#cfcfcf" stroke="#cfcfcf" stroke-width="0.9"/></svg>
<span class="a t" style="top:372.50px;line-height:16px;font-size:12.5px;letter-spacing:-0.556px;color:#e2e2e2;left:1816px;">Labels</span>
<div class="a" style="left:1858px;top:371.5px;width:37.5px;height:17.5px;background:#5a5a5a;border-radius:3px;"></div>
<div class="a" style="left:1859px;top:372.5px;width:16.5px;height:15.5px;background:#2a2a2a;border-radius:3px;"></div>
<svg class="a" style="left:1862px;top:375px;" width="11" height="11" viewBox="0 0 11 11"><rect x="0.5" y="0.5" width="4" height="4" rx="0.6" fill="#2fd06a"/><rect x="6.3" y="0.5" width="4" height="4" rx="0.6" fill="#2fd06a"/><rect x="0.5" y="6.3" width="4" height="4" rx="0.6" fill="#2fd06a"/><rect x="6.3" y="6.3" width="4" height="4" rx="0.6" fill="#2fd06a"/></svg>
<svg class="a" style="left:1880px;top:375.5px;" width="12" height="10" viewBox="0 0 12 10"><path d="M0.5 1 H11.5 M0.5 4.6 H11.5 M0.5 8.2 H11.5" stroke="#e2e2e2" stroke-width="1.1"/></svg>
<div class="a" style="left:1598.5px;top:392.5px;width:275px;height:16.5px;background:#454545;border-radius:3px;border:1px solid #5a5a5a;"></div>
<span class="a t" style="top:394.00px;line-height:16px;font-size:12.5px;letter-spacing:-0.477px;color:#e2e2e2;left:1601px;">new</span>
<svg class="a" style="left:1860px;top:397.5px;" width="10" height="7" viewBox="0 0 10 7"><path d="M1 1 L5 5 L9 1" fill="none" stroke="#cfcfcf" stroke-width="1.1"/></svg>
<div class="a" style="left:1880.5px;top:400.2px;width:2px;height:2px;background:#e2e2e2;"></div>
<div class="a" style="left:1885.5px;top:400.2px;width:2px;height:2px;background:#e2e2e2;"></div>
<div class="a" style="left:1890.5px;top:400.2px;width:2px;height:2px;background:#e2e2e2;"></div>
<div class="a" style="left:1598px;top:410px;width:297.5px;height:74px;background:#262626;"></div>
<div class="a" style="left:1600px;top:412px;width:18px;height:18px;background:#8c52ff;border-radius:3px;"></div>
<div class="a" style="left:1622px;top:412px;width:18px;height:18px;background:#4fa3ff;border-radius:3px;"></div>
<div class="a" style="left:1644px;top:412px;width:18px;height:18px;background:#ff7752;border-radius:3px;"></div>
<div class="a" style="left:1666px;top:412px;width:18px;height:18px;background:#4fffb4;border-radius:3px;"></div>
<div class="a" style="left:1688px;top:412px;width:18px;height:18px;background:#ff4f5e;border-radius:3px;"></div>
<div class="a" style="left:1710px;top:412px;width:18px;height:18px;background:#fd4fbf;border-radius:3px;"></div>
<div class="a" style="left:1593px;top:490px;width:38px;height:23px;background:#454545;border-radius:5px 5px 0 0;"></div>
<span class="a t" style="top:493.50px;line-height:16px;font-size:12.5px;letter-spacing:-0.159px;color:#e2e2e2;left:1598.5px;">Align</span>
<div class="a" style="left:1593px;top:512px;width:321px;height:68px;background:#454545;"></div>
<span class="a t" style="top:524.00px;line-height:16px;font-size:12.5px;letter-spacing:-0.121px;color:#e2e2e2;left:1601px;">Alignment</span>
<span class="a t" style="top:552.00px;line-height:16px;font-size:12.5px;letter-spacing:0.123px;color:#e2e2e2;left:1601px;">Distribution</span>
<div class="a" style="left:1790.5px;top:522.5px;width:53.5px;height:17px;background:#2a2a2a;border-radius:4px;box-shadow:0 0 0 0.5px #383838;"></div>
<div class="a" style="left:1808.0px;top:522.5px;width:1px;height:17px;background:#3c3c3c;"></div>
<div class="a" style="left:1826.0px;top:522.5px;width:1px;height:17px;background:#3c3c3c;"></div>
<svg class="a" style="left:1790.5px;top:522.5px;" width="54" height="17" viewBox="0 0 54 17"><path d="M2.8 2 V15" stroke="#e6e6e6" stroke-width="1.1"/><path d="M5 6 H11 M5 11 H14.6" stroke="#e6e6e6" stroke-width="1.8"/><path d="M26.8 2 V15" stroke="#e6e6e6" stroke-width="1.1"/><path d="M22.6 6 H31 M21 11 H32.6" stroke="#e6e6e6" stroke-width="1.8"/><path d="M51 2 V15" stroke="#e6e6e6" stroke-width="1.1"/><path d="M42.6 6 H48.8 M39 11 H48.8" stroke="#e6e6e6" stroke-width="1.8"/></svg>
<div class="a" style="left:1852.5px;top:522.5px;width:53.5px;height:17px;background:#2a2a2a;border-radius:4px;box-shadow:0 0 0 0.5px #383838;"></div>
<div class="a" style="left:1870.0px;top:522.5px;width:1px;height:17px;background:#3c3c3c;"></div>
<div class="a" style="left:1888.0px;top:522.5px;width:1px;height:17px;background:#3c3c3c;"></div>
<svg class="a" style="left:1852.5px;top:522.5px;" width="54" height="17" viewBox="0 0 54 17"><path d="M2 2.8 H15.4" stroke="#e6e6e6" stroke-width="1.1"/><path d="M6 4.6 V14.6 M11.2 4.6 V10.6" stroke="#e6e6e6" stroke-width="1.8"/><path d="M20 8.5 H33.6" stroke="#e6e6e6" stroke-width="1.1"/><path d="M24.6 3 V14 M29.6 5 V12" stroke="#e6e6e6" stroke-width="1.8"/><path d="M38 14.4 H51.6" stroke="#e6e6e6" stroke-width="1.1"/><path d="M42.6 8 V12.8 M47.6 3 V12.8" stroke="#e6e6e6" stroke-width="1.8"/></svg>
<div class="a" style="left:1790.5px;top:551px;width:53.5px;height:17px;background:#2a2a2a;border-radius:4px;box-shadow:0 0 0 0.5px #383838;"></div>
<div class="a" style="left:1808.0px;top:551px;width:1px;height:17px;background:#3c3c3c;"></div>
<div class="a" style="left:1826.0px;top:551px;width:1px;height:17px;background:#3c3c3c;"></div>
<svg class="a" style="left:1790.5px;top:551px;" width="54" height="16" viewBox="0 0 54 16"><path d="M2.6 1.5 V14.5 M14.6 1.5 V14.5" stroke="#e6e6e6" stroke-width="1.1"/><path d="M8.6 3.4 V12.6" stroke="#e6e6e6" stroke-width="2.4"/><path d="M20 2.4 H33.6 M20 13.6 H33.6" stroke="#e6e6e6" stroke-width="1.1"/><path d="M22.6 8 H31" stroke="#e6e6e6" stroke-width="2.4"/><path d="M38.4 4 V2 H40.4 M49.2 2 H51.2 V4 M51.2 12 V14 H49.2 M40.4 14 H38.4 V12" fill="none" stroke="#e6e6e6" stroke-width="1"/><path d="M41.4 9 V13 M45 6.4 V10.4 M48.6 3.4 V7.4" stroke="#e6e6e6" stroke-width="2"/></svg>
<div class="a" style="left:494px;top:586px;width:89px;height:22.5px;background:#454545;border-radius:5px 5px 0 0;"></div>
<span class="a t" style="top:589.50px;line-height:16px;font-size:12.5px;letter-spacing:-0.448px;color:#e2e2e2;left:499.5px;">Scene Window</span>
<div class="a" style="left:584.5px;top:586.5px;width:99px;height:21.5px;background:#252525;border-radius:5px 5px 0 0;"></div>
<span class="a t" style="top:589.50px;line-height:16px;font-size:12.5px;letter-spacing:-0.323px;color:#e2e2e2;left:589.5px;">JavaScript Editor</span>
<div class="a" style="left:685px;top:586.5px;width:112px;height:21.5px;background:#252525;border-radius:5px 5px 0 0;"></div>
<span class="a t" style="top:589.50px;line-height:16px;font-size:12.5px;letter-spacing:-0.432px;color:#e2e2e2;left:690.5px;">Dependency Graph</span>
<div class="a" style="left:494px;top:608px;width:1420px;height:390px;background:#2a2a2a;"></div>
<span class="a t" style="top:612.00px;line-height:16px;font-size:12.5px;letter-spacing:-0.300px;color:#b4b4b4;left:723px;transform:translateX(-50%);">Composition 1</span>
<svg class="a" style="left:951.5px;top:615.5px;" width="9" height="9" viewBox="0 0 9 9"><path d="M1 1 L8 8 M8 1 L1 8" stroke="#bdbdbd" stroke-width="1"/></svg>
<div class="a" style="left:969px;top:615px;width:1px;height:11px;background:#d0d0d0;"></div>
<span class="a t" style="top:612.00px;line-height:16px;font-size:12.5px;letter-spacing:-0.300px;color:#b4b4b4;left:1193px;transform:translateX(-50%);">Composition 2</span>
<svg class="a" style="left:1421.5px;top:615.5px;" width="9" height="9" viewBox="0 0 9 9"><path d="M1 1 L8 8 M8 1 L1 8" stroke="#bdbdbd" stroke-width="1"/></svg>
<div class="a" style="left:1439px;top:610px;width:470px;height:20.5px;background:#454545;border-radius:4px 4px 0 0;"></div>
<span class="a t" style="top:612.00px;line-height:16px;font-size:12.5px;letter-spacing:-0.300px;color:#e2e2e2;left:1663px;transform:translateX(-50%);">Composition 3</span>
<svg class="a" style="left:1891.5px;top:615.5px;" width="9" height="9" viewBox="0 0 9 9"><path d="M1 1 L8 8 M8 1 L1 8" stroke="#bdbdbd" stroke-width="1"/></svg>
<div class="a" style="left:494px;top:630px;width:490px;height:42px;background:#454545;"></div>
<div class="a" style="left:496.5px;top:632.5px;width:279.5px;height:19px;background:#2a2a2a;border-radius:9.5px;"></div>
<svg class="a" style="left:500px;top:635px;" width="14" height="14" viewBox="0 0 14 14"><circle cx="6" cy="6" r="4.7" fill="none" stroke="#d6d6d6" stroke-width="1.2"/><path d="M9.6 9.6 L13 13" stroke="#d6d6d6" stroke-width="1.8" stroke-linecap="round"/></svg>
<span class="a t" style="top:635.00px;line-height:16px;font-size:12.5px;letter-spacing:-0.478px;color:#8a8a8a;left:520px;">Enter a layer name</span>
<div class="a" style="left:778.5px;top:633px;width:19px;height:18.5px;background:#2a2a2a;border-radius:3.5px;border:1px solid #505050;"></div>
<svg class="a" style="left:782.5px;top:636.5px;" width="11" height="11" viewBox="0 0 11 11"><path d="M5.5 0.5 V10.5 M0.5 5.5 H10.5" stroke="#f0f0f0" stroke-width="1.7"/></svg>
<svg class="a" style="left:793px;top:646.5px;" width="3" height="3" viewBox="0 0 3 3"><path d="M3 0 V3 H0 Z" fill="#5fb38d"/></svg>
<div class="a" style="left:822.5px;top:633px;width:19px;height:18.5px;background:#2a2a2a;border-radius:3.5px;border:1px solid #505050;"></div>
<svg class="a" style="left:825px;top:635px;" width="14" height="14" viewBox="0 0 14 14"><circle cx="4.6" cy="9.6" r="3.6" fill="#5c5c5c"/><circle cx="6.4" cy="7.8" r="3.8" fill="#8a8a8a"/><circle cx="8.8" cy="5.2" r="4" fill="#dcdcdc"/></svg>
<div class="a" style="left:844.5px;top:633px;width:19px;height:18.5px;background:#2a2a2a;border-radius:3.5px;border:1px solid #505050;"></div>
<svg class="a" style="left:847px;top:635.5px;" width="14" height="14" viewBox="0 0 14 14"><path d="M8 5.2 L8.9 8.1 L11.8 9 L8.9 9.9 L8 12.8 L7.1 9.9 L4.2 9 L7.1 8.1 Z" fill="#e6e6e6"/><circle cx="2.2" cy="2.2" r="1.1" fill="#e6e6e6"/><circle cx="7" cy="1.8" r="1.1" fill="#e6e6e6"/><circle cx="2" cy="7.5" r="1" fill="#e6e6e6"/></svg>
<svg class="a" style="left:859.5px;top:646.5px;" width="3" height="3" viewBox="0 0 3 3"><path d="M3 0 V3 H0 Z" fill="#5fb38d"/></svg>
<div class="a" style="left:866.5px;top:633px;width:19px;height:18.5px;background:#2a2a2a;border-radius:3.5px;border:1px solid #505050;"></div>
<svg class="a" style="left:869.5px;top:636px;" width="13" height="13" viewBox="0 0 13 13"><path d="M0.5 2 H3.6 M6.8 2 H12.5 M0.5 6.3 H6.6 M9.8 6.3 H12.5 M0.5 10.6 H3.6 M6.8 10.6 H12.5" stroke="#dcdcdc" stroke-width="1"/><circle cx="5.2" cy="2" r="1.5" fill="none" stroke="#dcdcdc" stroke-width="0.9"/><circle cx="8.2" cy="6.3" r="1.5" fill="none" stroke="#dcdcdc" stroke-width="0.9"/><circle cx="5.2" cy="10.6" r="1.5" fill="none" stroke="#dcdcdc" stroke-width="0.9"/></svg>
<svg class="a" style="left:881.5px;top:646.5px;" width="3" height="3" viewBox="0 0 3 3"><path d="M3 0 V3 H0 Z" fill="#5fb38d"/></svg>
<div class="a" style="left:888.5px;top:632.5px;width:93.5px;height:19px;background:#2a2a2a;border-radius:3px;"></div>
<span class="a t" style="top:635.20px;line-height:16px;font-size:12.5px;letter-spacing:-0.300px;color:#4f4f4f;left:893px;">F</span>
<span class="a t" style="top:635.20px;line-height:16px;font-size:12.5px;letter-spacing:0.048px;color:#e2e2e2;left:905px;">153</span>
<svg class="a" style="left:501px;top:656.5px;" width="9" height="12" viewBox="0 0 9 12"><path d="M2.2 5 V3.4 a2.3 2.3 0 0 1 4.6 0 V5" fill="none" stroke="#bdbdbd" stroke-width="1.3"/><rect x="0.6" y="5" width="7.8" height="6.4" rx="0.8" fill="#bdbdbd"/><rect x="3.6" y="7.2" width="1.8" height="2.2" fill="#464646"/></svg>
<svg class="a" style="left:517px;top:658px;" width="14" height="10" viewBox="0 0 14 10"><path d="M0.6 5 C3 0.8 11 0.8 13.4 5 C11 9.2 3 9.2 0.6 5 Z" fill="none" stroke="#bdbdbd" stroke-width="1.1"/><circle cx="7" cy="5" r="2.1" fill="#bdbdbd"/></svg>
<svg class="a" style="left:537px;top:656px;" width="13" height="14" viewBox="0 0 13 14"><path d="M6.5 0.8 L12 3.8 V10.2 L6.5 13.2 L1 10.2 V3.8 Z M1 3.8 L6.5 6.8 L12 3.8 M6.5 6.8 V13.2" fill="none" stroke="#bdbdbd" stroke-width="1.1" stroke-linejoin="round"/></svg>
<svg class="a" style="left:556px;top:657px;" width="14" height="12" viewBox="0 0 14 12"><path d="M0.6 4 H3 L6.6 0.8 V11.2 L3 8 H0.6 Z" fill="#bdbdbd"/><path d="M8.4 3.4 A3.4 3.4 0 0 1 8.4 8.6 M10.2 1.4 A6 6 0 0 1 10.2 10.6" fill="none" stroke="#bdbdbd" stroke-width="1.1"/></svg>
<svg class="a" style="left:575px;top:656px;" width="13" height="14" viewBox="0 0 13 14"><path d="M1.2 12.8 L1.7 10.9 L7.3 5.3 L8.7 6.7 L3.1 12.3 Z" fill="none" stroke="#bdbdbd" stroke-width="1"/><path d="M6.9 3.9 L10.1 7.1 M7.7 5.5 L10.3 2.5 a1.4 1.4 0 0 1 2 2 L9.5 6.9 Z" fill="#bdbdbd" stroke="#bdbdbd" stroke-width="1.2" stroke-linejoin="round"/></svg>
<svg class="a" style="left:593px;top:658.5px;" width="14" height="9" viewBox="0 0 14 9"><path d="M0.5 4.5 L3.6 0.8 H13 a0.8 0.8 0 0 1 .8 .8 V7.4 a0.8 0.8 0 0 1 -.8 .8 H3.6 Z" fill="#bdbdbd"/><circle cx="4.4" cy="4.5" r="1.3" fill="#464646"/></svg>
<span class="a t" style="top:656.00px;line-height:16px;font-size:12.5px;letter-spacing:-0.586px;color:#e2e2e2;left:649px;">Name</span>
<div class="a" style="left:494px;top:672px;width:476px;height:220px;background:#363636;"></div>
<div class="a" style="left:496px;top:805px;width:471.5px;height:20px;background:#4c503c;border-radius:3px;"></div>
<div class="a" style="left:970px;top:672px;width:14px;height:292px;background:#2f2f2f;"></div>
<div class="a" style="left:972px;top:673px;width:10px;height:287px;background:#4a4a4a;border-radius:5px;"></div>
<div class="a" style="left:496px;top:674.3px;width:17.5px;height:17.5px;background:#2a2a2a;border-radius:2.5px;"></div>
<div class="a" style="left:515px;top:674.3px;width:17.8px;height:17.5px;background:#2a2a2a;border-radius:2.5px;"></div>
<svg class="a" style="left:518px;top:676.5px;" width="12" height="13" viewBox="0 0 12 13"><circle cx="6" cy="6.5" r="4.9" fill="none" stroke="#d9d9d9" stroke-width="1.1"/><path d="M3.5 6.4 L5.6 8.5 L10.6 2.4" fill="none" stroke="#d9d9d9" stroke-width="1.5" stroke-linecap="round" stroke-linejoin="round"/></svg>
<div class="a" style="left:573px;top:675px;width:16px;height:16px;background:#6fe0a0;border-radius:2.5px;box-shadow:0 0 0 0.7px #2a2a2a;"></div>
<svg class="a" style="left:593px;top:678.5px;" width="14" height="9" viewBox="0 0 14 9"><path d="M0.5 4.5 L3.6 0.8 H13 a0.8 0.8 0 0 1 .8 .8 V7.4 a0.8 0.8 0 0 1 -.8 .8 H3.6 Z" fill="#e0e0e0"/><circle cx="4.4" cy="4.5" r="1.3" fill="#363636"/></svg>
<div class="a" style="left:610.5px;top:674.3px;width:31px;height:17.5px;background:#303030;border-radius:2.5px;"></div>
<svg class="a" style="left:613px;top:680px;" width="10" height="7" viewBox="0 0 10 7"><path d="M1 1 L5 5 L9 1" fill="none" stroke="#8f8f8f" stroke-width="1.1"/></svg>
<svg class="a" style="left:649px;top:676.0px;" width="14" height="14" viewBox="0 0 14 14"><rect x="0.5" y="5.5" width="8" height="8" fill="#a9d8ff"/><path d="M5.5 5 V1" stroke="#2b2b2b" stroke-width="0"/><path d="M6.5 1 H14 M6.5 3.6 H14 M9.6 6.2 H14" stroke="#e6e6e6" stroke-width="1.1"/></svg>
<span class="a t" style="top:676.20px;line-height:16px;font-size:12.5px;letter-spacing:-0.138px;color:#e2e2e2;left:667px;">Color Array</span>
<div class="a" style="left:930px;top:675.3px;width:21px;height:15.5px;background:#2a2a2a;border-radius:3px;"></div>
<svg class="a" style="left:932px;top:679px;" width="8" height="8" viewBox="0 0 8 8"><path d="M0.6 4 L3 0.8 H6.4 V7.2 H3 Z" fill="#dcb95d"/></svg>
<svg class="a" style="left:942px;top:679px;" width="8" height="8" viewBox="0 0 8 8"><path d="M7.4 4 L5 0.8 H1.6 V7.2 H5 Z" fill="#c955f0"/></svg>
<svg class="a" style="left:956px;top:678px;" width="10" height="10" viewBox="0 0 10 10"><circle cx="5" cy="5" r="4" fill="none" stroke="#8a8a8a" stroke-width="1"/></svg>
<div class="a" style="left:496px;top:696.3px;width:17.5px;height:17.5px;background:#2a2a2a;border-radius:2.5px;"></div>
<div class="a" style="left:515px;top:696.3px;width:17.8px;height:17.5px;background:#2a2a2a;border-radius:2.5px;"></div>
<svg class="a" style="left:518px;top:698.5px;" width="12" height="13" viewBox="0 0 12 13"><circle cx="6" cy="6.5" r="4.9" fill="none" stroke="#d9d9d9" stroke-width="1.1"/><path d="M3.5 6.4 L5.6 8.5 L10.6 2.4" fill="none" stroke="#d9d9d9" stroke-width="1.5" stroke-linecap="round" stroke-linejoin="round"/></svg>
<div class="a" style="left:573px;top:697px;width:16px;height:16px;background:#cdef7f;border-radius:2.5px;box-shadow:0 0 0 0.7px #2a2a2a;"></div>
<svg class="a" style="left:593px;top:700.5px;" width="14" height="9" viewBox="0 0 14 9"><path d="M0.5 4.5 L3.6 0.8 H13 a0.8 0.8 0 0 1 .8 .8 V7.4 a0.8 0.8 0 0 1 -.8 .8 H3.6 Z" fill="#e0e0e0"/><circle cx="4.4" cy="4.5" r="1.3" fill="#363636"/></svg>
<svg class="a" style="left:668px;top:697.5px;" width="15" height="15" viewBox="0 0 15 15"><path d="M0.3999999999999999 0.3999999999999999 L3.6 3.6 M3.6 0.3999999999999999 L0.3999999999999999 3.6" stroke="#8bdc8f" stroke-width="1"/><path d="M10.4 1.0 L13.6 4.2 M13.6 1.0 L10.4 4.2" stroke="#8bdc8f" stroke-width="1"/><path d="M11.4 8.8 L14.6 12.0 M14.6 8.8 L11.4 12.0" stroke="#8bdc8f" stroke-width="1"/><path d="M1.4 10.4 L4.6 13.6 M4.6 10.4 L1.4 13.6" stroke="#8bdc8f" stroke-width="1"/><circle cx="6.4" cy="6" r="1.2" fill="#8bdc8f"/><circle cx="9.4" cy="8.6" r="1.2" fill="#8bdc8f"/></svg>
<span class="a t" style="top:698.20px;line-height:16px;font-size:12.5px;letter-spacing:-0.425px;color:#e2e2e2;left:686px;">Random [Index]</span>
<div class="a" style="left:930px;top:697.3px;width:21px;height:15.5px;background:#2a2a2a;border-radius:3px;"></div>
<svg class="a" style="left:932px;top:701px;" width="8" height="8" viewBox="0 0 8 8"><path d="M0.6 4 L3 0.8 H6.4 V7.2 H3 Z" fill="#6e6e6e"/></svg>
<svg class="a" style="left:942px;top:701px;" width="8" height="8" viewBox="0 0 8 8"><path d="M7.4 4 L5 0.8 H1.6 V7.2 H5 Z" fill="#c955f0"/></svg>
<svg class="a" style="left:956px;top:700px;" width="10" height="10" viewBox="0 0 10 10"><circle cx="5" cy="5" r="4" fill="none" stroke="#8a8a8a" stroke-width="1"/></svg>
<div class="a" style="left:496px;top:718.3px;width:17.5px;height:17.5px;background:#2a2a2a;border-radius:2.5px;"></div>
<div class="a" style="left:515px;top:718.3px;width:17.8px;height:17.5px;background:#2a2a2a;border-radius:2.5px;"></div>
<svg class="a" style="left:518px;top:720.5px;" width="12" height="13" viewBox="0 0 12 13"><circle cx="6" cy="6.5" r="4.9" fill="none" stroke="#d9d9d9" stroke-width="1.1"/><path d="M3.5 6.4 L5.6 8.5 L10.6 2.4" fill="none" stroke="#d9d9d9" stroke-width="1.5" stroke-linecap="round" stroke-linejoin="round"/></svg>
<div class="a" style="left:573px;top:719px;width:16px;height:16px;background:#cdef7f;border-radius:2.5px;box-shadow:0 0 0 0.7px #2a2a2a;"></div>
<svg class="a" style="left:593px;top:722.5px;" width="14" height="9" viewBox="0 0 14 9"><path d="M0.5 4.5 L3.6 0.8 H13 a0.8 0.8 0 0 1 .8 .8 V7.4 a0.8 0.8 0 0 1 -.8 .8 H3.6 Z" fill="#e0e0e0"/><circle cx="4.4" cy="4.5" r="1.3" fill="#363636"/></svg>
<svg class="a" style="left:646px;top:719.0px;" width="16" height="16" viewBox="0 0 16 16"><path d="M0.5 8 C1.8 1 3 1 4.3 7 S6.8 14 8.2 7 S10.6 1 12 7 S14.4 13 16 7" fill="none" stroke="#8bdc8f" stroke-width="1.2"/></svg>
<span class="a t" style="top:720.20px;line-height:16px;font-size:12.5px;letter-spacing:-0.283px;color:#e2e2e2;left:667px;">Oscillator [Position.Z] Cosine</span>
<div class="a" style="left:930px;top:719.3px;width:21px;height:15.5px;background:#2a2a2a;border-radius:3px;"></div>
<svg class="a" style="left:932px;top:723px;" width="8" height="8" viewBox="0 0 8 8"><path d="M0.6 4 L3 0.8 H6.4 V7.2 H3 Z" fill="#dcb95d"/></svg>
<svg class="a" style="left:942px;top:723px;" width="8" height="8" viewBox="0 0 8 8"><path d="M7.4 4 L5 0.8 H1.6 V7.2 H5 Z" fill="#c955f0"/></svg>
<div class="a" style="left:941px;top:719.3px;width:10px;height:15.5px;border-radius:1px;border:1px solid #a64fc4;"></div>
<svg class="a" style="left:956px;top:722px;" width="10" height="10" viewBox="0 0 10 10"><circle cx="5" cy="5" r="4" fill="none" stroke="#8a8a8a" stroke-width="1"/></svg>
<div class="a" style="left:496px;top:740.3px;width:17.5px;height:17.5px;background:#2a2a2a;border-radius:2.5px;"></div>
<div class="a" style="left:515px;top:740.3px;width:17.8px;height:17.5px;background:#2a2a2a;border-radius:2.5px;"></div>
<svg class="a" style="left:518px;top:742.5px;" width="12" height="13" viewBox="0 0 12 13"><circle cx="6" cy="6.5" r="4.9" fill="none" stroke="#d9d9d9" stroke-width="1.1"/><path d="M3.5 6.4 L5.6 8.5 L10.6 2.4" fill="none" stroke="#d9d9d9" stroke-width="1.5" stroke-linecap="round" stroke-linejoin="round"/></svg>
<div class="a" style="left:573px;top:741px;width:16px;height:16px;background:#cdef7f;border-radius:2.5px;box-shadow:0 0 0 0.7px #2a2a2a;"></div>
<svg class="a" style="left:593px;top:744.5px;" width="14" height="9" viewBox="0 0 14 9"><path d="M0.5 4.5 L3.6 0.8 H13 a0.8 0.8 0 0 1 .8 .8 V7.4 a0.8 0.8 0 0 1 -.8 .8 H3.6 Z" fill="#e0e0e0"/><circle cx="4.4" cy="4.5" r="1.3" fill="#363636"/></svg>
<svg class="a" style="left:646px;top:741.0px;" width="16" height="16" viewBox="0 0 16 16"><path d="M0.5 8 C1.8 1 3 1 4.3 7 S6.8 14 8.2 7 S10.6 1 12 7 S14.4 13 16 7" fill="none" stroke="#8bdc8f" stroke-width="1.2"/></svg>
<span class="a t" style="top:742.20px;line-height:16px;font-size:12.5px;letter-spacing:-0.260px;color:#e2e2e2;left:667px;">Oscillator [Position.X] Sine Driver</span>
<div class="a" style="left:930px;top:741.3px;width:21px;height:15.5px;background:#2a2a2a;border-radius:3px;"></div>
<svg class="a" style="left:932px;top:745px;" width="8" height="8" viewBox="0 0 8 8"><path d="M0.6 4 L3 0.8 H6.4 V7.2 H3 Z" fill="#dcb95d"/></svg>
<svg class="a" style="left:942px;top:745px;" width="8" height="8" viewBox="0 0 8 8"><path d="M7.4 4 L5 0.8 H1.6 V7.2 H5 Z" fill="#c955f0"/></svg>
<div class="a" style="left:941px;top:741.3px;width:10px;height:15.5px;border-radius:1px;border:1px solid #a64fc4;"></div>
<svg class="a" style="left:956px;top:744px;" width="10" height="10" viewBox="0 0 10 10"><circle cx="5" cy="5" r="4" fill="none" stroke="#8a8a8a" stroke-width="1"/></svg>
<div class="a" style="left:496px;top:762.3px;width:17.5px;height:17.5px;background:#2a2a2a;border-radius:2.5px;"></div>
<div class="a" style="left:515px;top:762.3px;width:17.8px;height:17.5px;background:#2a2a2a;border-radius:2.5px;"></div>
<svg class="a" style="left:518px;top:764.5px;" width="12" height="13" viewBox="0 0 12 13"><circle cx="6" cy="6.5" r="4.9" fill="none" stroke="#d9d9d9" stroke-width="1.1"/><path d="M3.5 6.4 L5.6 8.5 L10.6 2.4" fill="none" stroke="#d9d9d9" stroke-width="1.5" stroke-linecap="round" stroke-linejoin="round"/></svg>
<div class="a" style="left:573px;top:763px;width:16px;height:16px;background:#6a8fe8;border-radius:2.5px;box-shadow:0 0 0 0.7px #2a2a2a;"></div>
<svg class="a" style="left:593px;top:766.5px;" width="14" height="9" viewBox="0 0 14 9"><path d="M0.5 4.5 L3.6 0.8 H13 a0.8 0.8 0 0 1 .8 .8 V7.4 a0.8 0.8 0 0 1 -.8 .8 H3.6 Z" fill="#e0e0e0"/><circle cx="4.4" cy="4.5" r="1.3" fill="#363636"/></svg>
<svg class="a" style="left:648px;top:764.0px;" width="14" height="14" viewBox="0 0 14 14"><rect x="1" y="4" width="8.6" height="9.6" fill="#a9d8ff"/><path d="M5.2 6 V12" stroke="#2b2b2b" stroke-width="1.4"/><path d="M11 0 L11.7 2.3 L14 3 L11.7 3.7 L11 6 L10.3 3.7 L8 3 L10.3 2.3 Z" fill="#e6e6e6"/></svg>
<span class="a t" style="top:764.20px;line-height:16px;font-size:12.5px;letter-spacing:-0.273px;color:#e2e2e2;left:667px;">Index Context [Number]</span>
<div class="a" style="left:930px;top:763.3px;width:21px;height:15.5px;background:#2a2a2a;border-radius:3px;"></div>
<svg class="a" style="left:932px;top:767px;" width="8" height="8" viewBox="0 0 8 8"><path d="M0.6 4 L3 0.8 H6.4 V7.2 H3 Z" fill="#6e6e6e"/></svg>
<svg class="a" style="left:942px;top:767px;" width="8" height="8" viewBox="0 0 8 8"><path d="M7.4 4 L5 0.8 H1.6 V7.2 H5 Z" fill="#c955f0"/></svg>
<svg class="a" style="left:956px;top:766px;" width="10" height="10" viewBox="0 0 10 10"><circle cx="5" cy="5" r="4" fill="none" stroke="#8a8a8a" stroke-width="1"/></svg>
<div class="a" style="left:496px;top:784.3px;width:17.5px;height:17.5px;background:#2a2a2a;border-radius:2.5px;"></div>
<div class="a" style="left:515px;top:784.3px;width:17.8px;height:17.5px;background:#2a2a2a;border-radius:2.5px;"></div>
<svg class="a" style="left:518px;top:786.5px;" width="12" height="13" viewBox="0 0 12 13"><circle cx="6" cy="6.5" r="4.9" fill="none" stroke="#d9d9d9" stroke-width="1.1"/><path d="M3.5 6.4 L5.6 8.5 L10.6 2.4" fill="none" stroke="#d9d9d9" stroke-width="1.5" stroke-linecap="round" stroke-linejoin="round"/></svg>
<div class="a" style="left:573px;top:785px;width:16px;height:16px;background:#6a8fe8;border-radius:2.5px;box-shadow:0 0 0 0.7px #2a2a2a;"></div>
<svg class="a" style="left:593px;top:788.5px;" width="14" height="9" viewBox="0 0 14 9"><path d="M0.5 4.5 L3.6 0.8 H13 a0.8 0.8 0 0 1 .8 .8 V7.4 a0.8 0.8 0 0 1 -.8 .8 H3.6 Z" fill="#e0e0e0"/><circle cx="4.4" cy="4.5" r="1.3" fill="#363636"/></svg>
<svg class="a" style="left:647.5px;top:785.5px;" width="15" height="15" viewBox="0 0 15 15"><path d="M0.5 10 H14.5 M0.5 12.6 H14.5" stroke="#a9d8ff" stroke-width="1" stroke-dasharray="3 1.2"/><text x="0" y="7.6" font-family="Liberation Sans" font-size="8" fill="#e6e6e6" letter-spacing="-0.2">abc</text></svg>
<span class="a t" style="top:786.20px;line-height:16px;font-size:12.5px;letter-spacing:-0.243px;color:#e2e2e2;left:667px;">String Generator [String]</span>
<div class="a" style="left:930px;top:785.3px;width:21px;height:15.5px;background:#2a2a2a;border-radius:3px;"></div>
<svg class="a" style="left:932px;top:789px;" width="8" height="8" viewBox="0 0 8 8"><path d="M0.6 4 L3 0.8 H6.4 V7.2 H3 Z" fill="#dcb95d"/></svg>
<svg class="a" style="left:942px;top:789px;" width="8" height="8" viewBox="0 0 8 8"><path d="M7.4 4 L5 0.8 H1.6 V7.2 H5 Z" fill="#c955f0"/></svg>
<svg class="a" style="left:956px;top:788px;" width="10" height="10" viewBox="0 0 10 10"><circle cx="5" cy="5" r="4" fill="none" stroke="#8a8a8a" stroke-width="1"/></svg>
<div class="a" style="left:496px;top:806.3px;width:17.5px;height:17.5px;background:#2a2a2a;border-radius:2.5px;"></div>
<div class="a" style="left:515px;top:806.3px;width:17.8px;height:17.5px;background:#2a2a2a;border-radius:2.5px;"></div>
<svg class="a" style="left:518px;top:808.5px;" width="12" height="13" viewBox="0 0 12 13"><circle cx="6" cy="6.5" r="4.9" fill="none" stroke="#d9d9d9" stroke-width="1.1"/><path d="M3.5 6.4 L5.6 8.5 L10.6 2.4" fill="none" stroke="#d9d9d9" stroke-width="1.5" stroke-linecap="round" stroke-linejoin="round"/></svg>
<div class="a" style="left:573px;top:807px;width:16px;height:16px;background:#cdef7f;border-radius:2.5px;box-shadow:0 0 0 0.7px #2a2a2a;"></div>
<svg class="a" style="left:593px;top:810.5px;" width="14" height="9" viewBox="0 0 14 9"><path d="M0.5 4.5 L3.6 0.8 H13 a0.8 0.8 0 0 1 .8 .8 V7.4 a0.8 0.8 0 0 1 -.8 .8 H3.6 Z" fill="#e0e0e0"/><circle cx="4.4" cy="4.5" r="1.3" fill="#4c503c"/></svg>
<svg class="a" style="left:647px;top:806.5px;" width="17" height="17" viewBox="0 0 17 17"><path d="M3 1 V12.5 H13.5" fill="none" stroke="#d6d6d6" stroke-width="1.1"/><path d="M3 12.5 L10 5.5" stroke="#d6d6d6" stroke-width="1.1"/><path d="M0.8 3.2 L3 0.8 L5.2 3.2 M12.6 10.6 L15.2 13 M13 15.4 L15.4 13" fill="none" stroke="#7fd08f" stroke-width="1.1"/></svg>
<span class="a t" style="top:808.20px;line-height:16px;font-size:12.5px;letter-spacing:-0.035px;color:#e2e2e2;left:667px;">3D Matrix [Duplicator]</span>
<div class="a" style="left:930px;top:807.3px;width:21px;height:15.5px;background:#2a2a2a;border-radius:3px;"></div>
<svg class="a" style="left:932px;top:811px;" width="8" height="8" viewBox="0 0 8 8"><path d="M0.6 4 L3 0.8 H6.4 V7.2 H3 Z" fill="#dcb95d"/></svg>
<svg class="a" style="left:942px;top:811px;" width="8" height="8" viewBox="0 0 8 8"><path d="M7.4 4 L5 0.8 H1.6 V7.2 H5 Z" fill="#c955f0"/></svg>
<svg class="a" style="left:956px;top:810px;" width="10" height="10" viewBox="0 0 10 10"><circle cx="5" cy="5" r="4" fill="none" stroke="#6a6a6a" stroke-width="1"/></svg>
<div class="a" style="left:496px;top:828.3px;width:17.5px;height:17.5px;background:#2a2a2a;border-radius:2.5px;"></div>
<div class="a" style="left:515px;top:828.3px;width:17.8px;height:17.5px;background:#2a2a2a;border-radius:2.5px;"></div>
<div class="a" style="left:534.5px;top:828.3px;width:17.5px;height:17.5px;background:#2a2a2a;border-radius:2.5px;"></div>
<svg class="a" style="left:517px;top:832px;" width="14" height="10" viewBox="0 0 14 10"><path d="M0.6 5 C3 0.8 11 0.8 13.4 5 C11 9.2 3 9.2 0.6 5 Z" fill="none" stroke="#d9d9d9" stroke-width="1.1"/><circle cx="7" cy="5" r="2.1" fill="#d9d9d9"/></svg>
<div class="a" style="left:573px;top:829px;width:16px;height:16px;background:#ffe680;border-radius:2.5px;box-shadow:0 0 0 0.7px #2a2a2a;"></div>
<svg class="a" style="left:593px;top:832.5px;" width="14" height="9" viewBox="0 0 14 9"><path d="M0.5 4.5 L3.6 0.8 H13 a0.8 0.8 0 0 1 .8 .8 V7.4 a0.8 0.8 0 0 1 -.8 .8 H3.6 Z" fill="#e0e0e0"/><circle cx="4.4" cy="4.5" r="1.3" fill="#363636"/></svg>
<svg class="a" style="left:648px;top:830.0px;" width="14" height="14" viewBox="0 0 14 14"><rect x="1.0" y="1.0" width="1.8" height="1.8" fill="#e6d66c"/><rect x="1.0" y="6.2" width="1.8" height="1.8" fill="#e6d66c"/><rect x="1.0" y="11.4" width="1.8" height="1.8" fill="#e6d66c"/><rect x="6.2" y="1.0" width="1.8" height="1.8" fill="#e6d66c"/><rect x="6.2" y="6.2" width="1.8" height="1.8" fill="#e6d66c"/><rect x="6.2" y="11.4" width="1.8" height="1.8" fill="#e6d66c"/><rect x="11.4" y="1.0" width="1.8" height="1.8" fill="#e6d66c"/><rect x="11.4" y="6.2" width="1.8" height="1.8" fill="#e6d66c"/><rect x="11.4" y="11.4" width="1.8" height="1.8" fill="#e6d66c"/></svg>
<span class="a t" style="top:830.20px;line-height:16px;font-size:12.5px;letter-spacing:-0.088px;color:#e2e2e2;left:667px;">Duplicator</span>
<div class="a" style="left:930px;top:829.3px;width:21px;height:15.5px;background:#2a2a2a;border-radius:3px;"></div>
<svg class="a" style="left:932px;top:833px;" width="8" height="8" viewBox="0 0 8 8"><path d="M0.6 4 L3 0.8 H6.4 V7.2 H3 Z" fill="#dcb95d"/></svg>
<svg class="a" style="left:942px;top:833px;" width="8" height="8" viewBox="0 0 8 8"><path d="M7.4 4 L5 0.8 H1.6 V7.2 H5 Z" fill="#c955f0"/></svg>
<div class="a" style="left:930px;top:829.3px;width:10px;height:15.5px;border-radius:1px;border:1px solid #c9aa62;"></div>
<svg class="a" style="left:956px;top:832px;" width="10" height="10" viewBox="0 0 10 10"><circle cx="5" cy="5" r="4" fill="none" stroke="#8a8a8a" stroke-width="1"/></svg>
<div class="a" style="left:496px;top:850.3px;width:17.5px;height:17.5px;background:#2a2a2a;border-radius:2.5px;"></div>
<div class="a" style="left:515px;top:850.3px;width:17.8px;height:17.5px;background:#2a2a2a;border-radius:2.5px;"></div>
<div class="a" style="left:534.5px;top:850.3px;width:17.5px;height:17.5px;background:#2a2a2a;border-radius:2.5px;"></div>
<div class="a" style="left:573px;top:851px;width:16px;height:16px;background:#ffe680;border-radius:2.5px;box-shadow:0 0 0 0.7px #2a2a2a;"></div>
<svg class="a" style="left:593px;top:854.5px;" width="14" height="9" viewBox="0 0 14 9"><path d="M0.5 4.5 L3.6 0.8 H13 a0.8 0.8 0 0 1 .8 .8 V7.4 a0.8 0.8 0 0 1 -.8 .8 H3.6 Z" fill="#e0e0e0"/><circle cx="4.4" cy="4.5" r="1.3" fill="#363636"/></svg>
<div class="a" style="left:610.5px;top:850.3px;width:31px;height:17.5px;background:#303030;border-radius:2.5px;"></div>
<svg class="a" style="left:613px;top:856px;" width="10" height="7" viewBox="0 0 10 7"><path d="M1 1 L5 5 L9 1" fill="none" stroke="#8f8f8f" stroke-width="1.1"/></svg>
<svg class="a" style="left:648px;top:852.0px;" width="14" height="14" viewBox="0 0 14 14"><rect x="1.5" y="1.5" width="11" height="11" fill="none" stroke="#e6d66c" stroke-width="1.1" stroke-dasharray="2.6 1.6"/><path d="M0.5 0.5h2v2h-2z M11.5 0.5h2v2h-2z M0.5 11.5h2v2h-2z M11.5 11.5h2v2h-2z" fill="#e6e6e6"/></svg>
<span class="a t" style="top:852.20px;line-height:16px;font-size:12.5px;letter-spacing:-0.673px;color:#9c9c9c;left:667px;">Ellipse Shape</span>
<div class="a" style="left:930px;top:851.3px;width:21px;height:15.5px;background:#2a2a2a;border-radius:3px;"></div>
<svg class="a" style="left:932px;top:855px;" width="8" height="8" viewBox="0 0 8 8"><path d="M0.6 4 L3 0.8 H6.4 V7.2 H3 Z" fill="#dcb95d"/></svg>
<svg class="a" style="left:942px;top:855px;" width="8" height="8" viewBox="0 0 8 8"><path d="M7.4 4 L5 0.8 H1.6 V7.2 H5 Z" fill="#c955f0"/></svg>
<svg class="a" style="left:956px;top:854px;" width="10" height="10" viewBox="0 0 10 10"><circle cx="5" cy="5" r="4" fill="none" stroke="#8a8a8a" stroke-width="1"/></svg>
<div class="a" style="left:496px;top:872.3px;width:17.5px;height:17.5px;background:#2a2a2a;border-radius:2.5px;"></div>
<div class="a" style="left:515px;top:872.3px;width:17.8px;height:17.5px;background:#2a2a2a;border-radius:2.5px;"></div>
<div class="a" style="left:534.5px;top:872.3px;width:17.5px;height:17.5px;background:#2a2a2a;border-radius:2.5px;"></div>
<svg class="a" style="left:517px;top:876px;" width="14" height="10" viewBox="0 0 14 10"><path d="M0.6 5 C3 0.8 11 0.8 13.4 5 C11 9.2 3 9.2 0.6 5 Z" fill="none" stroke="#4a4a4a" stroke-width="1.1"/><circle cx="7" cy="5" r="2.1" fill="#4a4a4a"/></svg>
<div class="a" style="left:573px;top:873px;width:16px;height:16px;background:#b68cff;border-radius:2.5px;box-shadow:0 0 0 0.7px #2a2a2a;"></div>
<svg class="a" style="left:593px;top:876.5px;" width="14" height="9" viewBox="0 0 14 9"><path d="M0.5 4.5 L3.6 0.8 H13 a0.8 0.8 0 0 1 .8 .8 V7.4 a0.8 0.8 0 0 1 -.8 .8 H3.6 Z" fill="#e0e0e0"/><circle cx="4.4" cy="4.5" r="1.3" fill="#363636"/></svg>
<svg class="a" style="left:666.5px;top:873.0px;" width="16" height="16" viewBox="0 0 16 16"><rect x="1.2" y="1.2" width="13.6" height="13.6" fill="none" stroke="#e6e6e6" stroke-width="1"/><path d="M0 0h2.4v2.4h-2.4z M13.6 0h2.4v2.4h-2.4z M0 13.6h2.4v2.4h-2.4z M13.6 13.6h2.4v2.4h-2.4z" fill="#e6e6e6"/><path d="M4 4 H12 V6 H9.1 V12.4 H6.9 V6 H4 Z" fill="#e6d66c"/></svg>
<span class="a t" style="top:874.20px;line-height:16px;font-size:12.5px;letter-spacing:-0.339px;color:#9c9c9c;left:686px;">Cavalry</span>
<div class="a" style="left:930px;top:873.3px;width:21px;height:15.5px;background:#2a2a2a;border-radius:3px;"></div>
<svg class="a" style="left:932px;top:877px;" width="8" height="8" viewBox="0 0 8 8"><path d="M0.6 4 L3 0.8 H6.4 V7.2 H3 Z" fill="#dcb95d"/></svg>
<svg class="a" style="left:942px;top:877px;" width="8" height="8" viewBox="0 0 8 8"><path d="M7.4 4 L5 0.8 H1.6 V7.2 H5 Z" fill="#6e6e6e"/></svg>
<svg class="a" style="left:956px;top:876px;" width="10" height="10" viewBox="0 0 10 10"><circle cx="5" cy="5" r="4" fill="none" stroke="#8a8a8a" stroke-width="1"/></svg>
<div class="a" style="left:984px;top:630px;width:7px;height:368px;background:#232323;"></div>
<div class="a" style="left:987px;top:808.0px;width:1.2px;height:1.2px;background:#8a8a8a;"></div>
<div class="a" style="left:987px;top:811.3px;width:1.2px;height:1.2px;background:#8a8a8a;"></div>
<div class="a" style="left:987px;top:814.6px;width:1.2px;height:1.2px;background:#8a8a8a;"></div>
<div class="a" style="left:987px;top:817.9px;width:1.2px;height:1.2px;background:#8a8a8a;"></div>
<div class="a" style="left:987px;top:821.2px;width:1.2px;height:1.2px;background:#8a8a8a;"></div>
<div class="a" style="left:494.5px;top:964px;width:475px;height:10px;background:#4d4d4d;border-radius:5px;"></div>
<div class="a" style="left:494px;top:976px;width:490px;height:22px;background:#454545;"></div>
<div class="a" style="left:497.5px;top:978px;width:18.5px;height:18.5px;background:#2a2a2a;border-radius:3.5px;border:1px solid #505050;"></div>
<svg class="a" style="left:500px;top:983px;" width="14" height="9" viewBox="0 0 14 9"><path d="M0.5 4.5 L3.6 0.8 H13 a0.8 0.8 0 0 1 .8 .8 V7.4 a0.8 0.8 0 0 1 -.8 .8 H3.6 Z" fill="#e0e0e0"/><circle cx="4.4" cy="4.5" r="1.3" fill="#2a2a2a"/></svg>
<span class="a t" style="top:980.00px;line-height:16px;font-size:12.5px;letter-spacing:-0.448px;color:#e2e2e2;left:520.5px;">1 selected</span>
<div class="a" style="left:775.5px;top:978px;width:18.5px;height:18.5px;background:#2a2a2a;border-radius:3.5px;border:1px solid #505050;"></div>
<svg class="a" style="left:779px;top:981.5px;" width="12" height="12" viewBox="0 0 12 12"><rect x="0.6" y="0.6" width="10.8" height="10.8" rx="1" fill="none" stroke="#e0e0e0" stroke-width="1.1"/><rect x="4.4" y="4.4" width="3.2" height="3.2" fill="#e0e0e0"/></svg>
<div class="a" style="left:798.5px;top:978px;width:182.5px;height:18.5px;background:#5a5a5a;border-radius:3.5px;"></div>
<div class="a" style="left:799.5px;top:979px;width:85.5px;height:16.5px;background:#2a2a2a;border-radius:3px;"></div>
<svg class="a" style="left:804.5px;top:982px;" width="12" height="11" viewBox="0 0 12 11"><path d="M0.5 1.2 H11.5 M2.6 5.5 H9.6 M0.5 9.8 H11.5" stroke="#2fd06a" stroke-width="1.8"/></svg>
<span class="a t" style="top:980.00px;line-height:16px;font-size:12.5px;letter-spacing:-0.222px;color:#e2e2e2;left:821px;">Time Editor</span>
<svg class="a" style="left:893px;top:981px;" width="13" height="13" viewBox="0 0 13 13"><path d="M2.5 0.5 V10.5 H12.5" fill="none" stroke="#bdbdbd" stroke-width="1.1"/><path d="M2.5 10.5 L11 3" stroke="#bdbdbd" stroke-width="1.1"/><path d="M0.5 2.2 L2.5 0.3 L4.5 2.2" fill="none" stroke="#bdbdbd" stroke-width="0.8"/></svg>
<span class="a t" style="top:980.00px;line-height:16px;font-size:12.5px;letter-spacing:-0.281px;color:#e2e2e2;left:910px;">Graph Editor</span>
<div class="a" style="left:991px;top:630px;width:923px;height:24px;background:#232323;"></div>
<svg class="a" style="left:991px;top:630px;" width="921" height="24" viewBox="0 0 921 24"><rect x="8.20" y="17" width="1" height="7" fill="#9a9a9a"/><rect x="19.07" y="20.3" width="1" height="3.7" fill="#9a9a9a"/><rect x="29.93" y="20.3" width="1" height="3.7" fill="#9a9a9a"/><rect x="40.80" y="20.3" width="1" height="3.7" fill="#9a9a9a"/><rect x="51.66" y="20.3" width="1" height="3.7" fill="#9a9a9a"/><rect x="62.53" y="17" width="1" height="7" fill="#9a9a9a"/><rect x="73.40" y="20.3" width="1" height="3.7" fill="#9a9a9a"/><rect x="84.26" y="20.3" width="1" height="3.7" fill="#9a9a9a"/><rect x="95.13" y="20.3" width="1" height="3.7" fill="#9a9a9a"/><rect x="105.99" y="20.3" width="1" height="3.7" fill="#9a9a9a"/><rect x="116.86" y="17" width="1" height="7" fill="#9a9a9a"/><rect x="127.73" y="20.3" width="1" height="3.7" fill="#9a9a9a"/><rect x="138.59" y="20.3" width="1" height="3.7" fill="#9a9a9a"/><rect x="149.46" y="20.3" width="1" height="3.7" fill="#9a9a9a"/><rect x="160.32" y="20.3" width="1" height="3.7" fill="#9a9a9a"/><rect x="171.19" y="17" width="1" height="7" fill="#9a9a9a"/><rect x="182.06" y="20.3" width="1" height="3.7" fill="#9a9a9a"/><rect x="192.92" y="20.3" width="1" height="3.7" fill="#9a9a9a"/><rect x="203.79" y="20.3" width="1" height="3.7" fill="#9a9a9a"/><rect x="214.65" y="20.3" width="1" height="3.7" fill="#9a9a9a"/><rect x="225.52" y="17" width="1" height="7" fill="#9a9a9a"/><rect x="236.39" y="20.3" width="1" height="3.7" fill="#9a9a9a"/><rect x="247.25" y="20.3" width="1" height="3.7" fill="#9a9a9a"/><rect x="258.12" y="20.3" width="1" height="3.7" fill="#9a9a9a"/><rect x="268.98" y="20.3" width="1" height="3.7" fill="#9a9a9a"/><rect x="279.85" y="17" width="1" height="7" fill="#9a9a9a"/><rect x="290.72" y="20.3" width="1" height="3.7" fill="#9a9a9a"/><rect x="301.58" y="20.3" width="1" height="3.7" fill="#9a9a9a"/><rect x="312.45" y="20.3" width="1" height="3.7" fill="#9a9a9a"/><rect x="323.31" y="20.3" width="1" height="3.7" fill="#9a9a9a"/><rect x="334.18" y="17" width="1" height="7" fill="#9a9a9a"/><rect x="345.05" y="20.3" width="1" height="3.7" fill="#9a9a9a"/><rect x="355.91" y="20.3" width="1" height="3.7" fill="#9a9a9a"/><rect x="366.78" y="20.3" width="1" height="3.7" fill="#9a9a9a"/><rect x="377.64" y="20.3" width="1" height="3.7" fill="#9a9a9a"/><rect x="388.51" y="17" width="1" height="7" fill="#9a9a9a"/><rect x="399.38" y="20.3" width="1" height="3.7" fill="#9a9a9a"/><rect x="410.24" y="20.3" width="1" height="3.7" fill="#9a9a9a"/><rect x="421.11" y="20.3" width="1" height="3.7" fill="#9a9a9a"/><rect x="431.97" y="20.3" width="1" height="3.7" fill="#9a9a9a"/><rect x="442.84" y="17" width="1" height="7" fill="#9a9a9a"/><rect x="453.71" y="20.3" width="1" height="3.7" fill="#9a9a9a"/><rect x="464.57" y="20.3" width="1" height="3.7" fill="#9a9a9a"/><rect x="475.44" y="20.3" width="1" height="3.7" fill="#9a9a9a"/><rect x="486.30" y="20.3" width="1" height="3.7" fill="#9a9a9a"/><rect x="497.17" y="17" width="1" height="7" fill="#9a9a9a"/><rect x="508.04" y="20.3" width="1" height="3.7" fill="#9a9a9a"/><rect x="518.90" y="20.3" width="1" height="3.7" fill="#9a9a9a"/><rect x="529.77" y="20.3" width="1" height="3.7" fill="#9a9a9a"/><rect x="540.63" y="20.3" width="1" height="3.7" fill="#9a9a9a"/><rect x="551.50" y="17" width="1" height="7" fill="#9a9a9a"/><rect x="562.37" y="20.3" width="1" height="3.7" fill="#9a9a9a"/><rect x="573.23" y="20.3" width="1" height="3.7" fill="#9a9a9a"/><rect x="584.10" y="20.3" width="1" height="3.7" fill="#9a9a9a"/><rect x="594.96" y="20.3" width="1" height="3.7" fill="#9a9a9a"/><rect x="605.83" y="17" width="1" height="7" fill="#9a9a9a"/><rect x="616.70" y="20.3" width="1" height="3.7" fill="#9a9a9a"/><rect x="627.56" y="20.3" width="1" height="3.7" fill="#9a9a9a"/><rect x="638.43" y="20.3" width="1" height="3.7" fill="#9a9a9a"/><rect x="649.29" y="20.3" width="1" height="3.7" fill="#9a9a9a"/><rect x="660.16" y="17" width="1" height="7" fill="#9a9a9a"/><rect x="671.03" y="20.3" width="1" height="3.7" fill="#9a9a9a"/><rect x="681.89" y="20.3" width="1" height="3.7" fill="#9a9a9a"/><rect x="692.76" y="20.3" width="1" height="3.7" fill="#9a9a9a"/><rect x="703.62" y="20.3" width="1" height="3.7" fill="#9a9a9a"/><rect x="714.49" y="17" width="1" height="7" fill="#9a9a9a"/><rect x="725.36" y="20.3" width="1" height="3.7" fill="#9a9a9a"/><rect x="736.22" y="20.3" width="1" height="3.7" fill="#9a9a9a"/><rect x="747.09" y="20.3" width="1" height="3.7" fill="#9a9a9a"/><rect x="757.95" y="20.3" width="1" height="3.7" fill="#9a9a9a"/><rect x="768.82" y="17" width="1" height="7" fill="#9a9a9a"/><rect x="779.69" y="20.3" width="1" height="3.7" fill="#9a9a9a"/><rect x="790.55" y="20.3" width="1" height="3.7" fill="#9a9a9a"/><rect x="801.42" y="20.3" width="1" height="3.7" fill="#9a9a9a"/><rect x="812.28" y="20.3" width="1" height="3.7" fill="#9a9a9a"/><rect x="823.15" y="17" width="1" height="7" fill="#9a9a9a"/><rect x="834.02" y="20.3" width="1" height="3.7" fill="#9a9a9a"/><rect x="844.88" y="20.3" width="1" height="3.7" fill="#9a9a9a"/><rect x="855.75" y="20.3" width="1" height="3.7" fill="#9a9a9a"/><rect x="866.61" y="20.3" width="1" height="3.7" fill="#9a9a9a"/><rect x="877.48" y="17" width="1" height="7" fill="#9a9a9a"/><rect x="888.35" y="20.3" width="1" height="3.7" fill="#9a9a9a"/><rect x="899.21" y="20.3" width="1" height="3.7" fill="#9a9a9a"/><rect x="910.08" y="20.3" width="1" height="3.7" fill="#9a9a9a"/></svg>
<span class="a t" style="top:630.50px;line-height:16px;font-size:12.5px;letter-spacing:-0.300px;color:#dadada;left:998.0px;transform:translateX(-50%);">0</span>
<span class="a t" style="top:630.50px;line-height:16px;font-size:12.5px;letter-spacing:-0.300px;color:#dadada;left:1052.83px;transform:translateX(-50%);">15</span>
<span class="a t" style="top:630.50px;line-height:16px;font-size:12.5px;letter-spacing:-0.300px;color:#dadada;left:1107.16px;transform:translateX(-50%);">30</span>
<span class="a t" style="top:630.50px;line-height:16px;font-size:12.5px;letter-spacing:-0.300px;color:#dadada;left:1161.49px;transform:translateX(-50%);">45</span>
<span class="a t" style="top:630.50px;line-height:16px;font-size:12.5px;letter-spacing:-0.300px;color:#dadada;left:1215.82px;transform:translateX(-50%);">60</span>
<span class="a t" style="top:630.50px;line-height:16px;font-size:12.5px;letter-spacing:-0.300px;color:#dadada;left:1270.1499999999999px;transform:translateX(-50%);">75</span>
<span class="a t" style="top:630.50px;line-height:16px;font-size:12.5px;letter-spacing:-0.300px;color:#dadada;left:1324.48px;transform:translateX(-50%);">90</span>
<span class="a t" style="top:630.50px;line-height:16px;font-size:12.5px;letter-spacing:-0.300px;color:#dadada;left:1380.01px;transform:translateX(-50%);">105</span>
<span class="a t" style="top:630.50px;line-height:16px;font-size:12.5px;letter-spacing:-0.300px;color:#dadada;left:1434.3400000000001px;transform:translateX(-50%);">120</span>
<span class="a t" style="top:630.50px;line-height:16px;font-size:12.5px;letter-spacing:-0.300px;color:#dadada;left:1488.67px;transform:translateX(-50%);">135</span>
<span class="a t" style="top:630.50px;line-height:16px;font-size:12.5px;letter-spacing:-0.300px;color:#dadada;left:1543.0px;transform:translateX(-50%);">150</span>
<span class="a t" style="top:630.50px;line-height:16px;font-size:12.5px;letter-spacing:-0.300px;color:#dadada;left:1597.33px;transform:translateX(-50%);">165</span>
<span class="a t" style="top:630.50px;line-height:16px;font-size:12.5px;letter-spacing:-0.300px;color:#dadada;left:1651.66px;transform:translateX(-50%);">180</span>
<span class="a t" style="top:630.50px;line-height:16px;font-size:12.5px;letter-spacing:-0.300px;color:#dadada;left:1705.99px;transform:translateX(-50%);">195</span>
<span class="a t" style="top:630.50px;line-height:16px;font-size:12.5px;letter-spacing:-0.300px;color:#dadada;left:1760.3200000000002px;transform:translateX(-50%);">210</span>
<span class="a t" style="top:630.50px;line-height:16px;font-size:12.5px;letter-spacing:-0.300px;color:#dadada;left:1814.65px;transform:translateX(-50%);">225</span>
<span class="a t" style="top:630.50px;line-height:16px;font-size:12.5px;letter-spacing:-0.300px;color:#dadada;left:1868.98px;transform:translateX(-50%);">240</span>
<div class="a" style="left:991px;top:654px;width:923px;height:18px;background:#282828;"></div>
<div class="a" style="left:1000px;top:654px;width:905px;height:16.5px;background:#454545;"></div>
<div class="a" style="left:994.8px;top:653px;width:5.4px;height:18px;background:#6fc4ae;"></div>
<div class="a" style="left:1905px;top:653px;width:5.4px;height:18px;background:#6fc4ae;"></div>
<div class="a" style="left:991px;top:672px;width:914px;height:291px;background:#282828;"></div>
<div class="a" style="left:1905px;top:672px;width:9px;height:291px;background:#232323;"></div>
<div class="a" style="left:1000px;top:674px;width:905px;height:18px;background:repeating-linear-gradient(135deg,#9af7c0 0,#9af7c0 1.2px,#7fe6a9 2.4px,#7be2a5 13.1px,#8aeeb3 13.7px,#8aeeb3 14.7px,#70d69b 15.5px,#66ca90 24.6px,#9af7c0 25.3px);background-position:-1.3px 0;"></div>
<span class="a t" style="top:675.30px;line-height:16px;font-size:12.5px;letter-spacing:-0.093px;color:#1f1f1f;left:1008px;">Color Array</span>
<div class="a" style="left:1000px;top:696px;width:905px;height:18px;background:repeating-linear-gradient(135deg,#e8fa92 0,#e8fa92 1.2px,#cff181 2.4px,#cbed7d 13.1px,#daf68a 13.7px,#daf68a 14.7px,#bfe276 15.5px,#b5d86e 24.6px,#e8fa92 25.3px);background-position:-1.3px 0;"></div>
<span class="a t" style="top:697.30px;line-height:16px;font-size:12.5px;letter-spacing:-0.425px;color:#1f1f1f;left:1008px;">Random [Index]</span>
<div class="a" style="left:1000px;top:718px;width:905px;height:18px;background:repeating-linear-gradient(135deg,#e8fa92 0,#e8fa92 1.2px,#cff181 2.4px,#cbed7d 13.1px,#daf68a 13.7px,#daf68a 14.7px,#bfe276 15.5px,#b5d86e 24.6px,#e8fa92 25.3px);background-position:-1.3px 0;"></div>
<span class="a t" style="top:719.30px;line-height:16px;font-size:12.5px;letter-spacing:-0.269px;color:#1f1f1f;left:1008px;">Oscillator [Position.Z] Cosine</span>
<div class="a" style="left:1000px;top:740px;width:905px;height:18px;background:repeating-linear-gradient(135deg,#e8fa92 0,#e8fa92 1.2px,#cff181 2.4px,#cbed7d 13.1px,#daf68a 13.7px,#daf68a 14.7px,#bfe276 15.5px,#b5d86e 24.6px,#e8fa92 25.3px);background-position:-1.3px 0;"></div>
<span class="a t" style="top:741.30px;line-height:16px;font-size:12.5px;letter-spacing:-0.251px;color:#1f1f1f;left:1008px;">Oscillator [Position.X] Sine Driver</span>
<div class="a" style="left:1000px;top:762px;width:905px;height:18px;background:repeating-linear-gradient(135deg,#7aa8ff 0,#7aa8ff 1.2px,#6a93ea 2.4px,#668ee6 13.1px,#729df6 13.7px,#729df6 14.7px,#6287db 15.5px,#5a7dcf 24.6px,#7aa8ff 25.3px);background-position:-1.3px 0;"></div>
<span class="a t" style="top:763.30px;line-height:16px;font-size:12.5px;letter-spacing:-0.654px;color:#fff;font-weight:bold;left:1008px;">Index Context [Number]</span>
<div class="a" style="left:1000px;top:784px;width:905px;height:18px;background:repeating-linear-gradient(135deg,#7aa8ff 0,#7aa8ff 1.2px,#6a93ea 2.4px,#668ee6 13.1px,#729df6 13.7px,#729df6 14.7px,#6287db 15.5px,#5a7dcf 24.6px,#7aa8ff 25.3px);background-position:-1.3px 0;"></div>
<span class="a t" style="top:785.30px;line-height:16px;font-size:12.5px;letter-spacing:-0.709px;color:#fff;font-weight:bold;left:1008px;">String Generator [String]</span>
<div class="a" style="left:1000px;top:806px;width:905px;height:18px;background:radial-gradient(circle at 50% 50%,#a5d05a 0,#a5d05a 0.85px,rgba(165,208,90,0) 1.25px) 0 0/3.5px 3px,repeating-linear-gradient(135deg,#eefab2 0,#eefab2 12.7px,#deef9c 12.7px,#deef9c 25.4px);border-top:1px solid #fafafa;border-bottom:1px solid #fafafa;"></div>
<span class="a t" style="top:807.30px;line-height:16px;font-size:12.5px;letter-spacing:-0.035px;color:#1f1f1f;left:1008px;">3D Matrix [Duplicator]</span>
<div class="a" style="left:1000px;top:828px;width:905px;height:18px;border-radius:0 3px 3px 0;background:#ffe680;"></div>
<span class="a t" style="top:829.30px;line-height:16px;font-size:12.5px;letter-spacing:-0.128px;color:#1f1f1f;left:1008px;">Duplicator</span>
<div class="a" style="left:1000px;top:850px;width:905px;height:18px;border-radius:0 3px 3px 0;background:#ffe680;"></div>
<span class="a t" style="top:851.30px;line-height:16px;font-size:12.5px;letter-spacing:-0.673px;color:#1f1f1f;left:1008px;">Ellipse Shape</span>
<div class="a" style="left:1000px;top:872px;width:905px;height:18px;border-radius:0 3px 3px 0;background:#b68cff;"></div>
<span class="a t" style="top:873.30px;line-height:16px;font-size:12.5px;letter-spacing:-0.739px;color:#fff;font-weight:bold;left:1008px;">Cavalry</span>
<div class="a" style="left:1553.3px;top:652px;width:1.4px;height:311px;background:rgba(125,205,176,0.8);"></div>
<svg class="a" style="left:1546.5px;top:643px;" width="15" height="10.5" viewBox="0 0 15 10.5"><path d="M0.2 0.8 H14.8 V2.6 L7.5 10.4 L0.2 2.6 Z" fill="#6fc5a8"/></svg>
<div class="a" style="left:992.5px;top:964px;width:920.3px;height:10px;background:#4d4d4d;border-radius:5px;"></div>
<div class="a" style="left:991px;top:976px;width:923px;height:22px;background:#454545;"></div>
<div class="a" style="left:994.5px;top:978px;width:18px;height:18.5px;background:#2a2a2a;border-radius:3.5px;border:1px solid #505050;"></div>
<svg class="a" style="left:997px;top:980.5px;" width="14" height="14" viewBox="0 0 14 14"><path d="M0.5 1.6 H12.5 M0.5 5.2 H12.5" stroke="#e0e0e0" stroke-width="1.7"/><path d="M0.5 9 H3 M4.6 9 H9 M0.5 12.4 H1.8 M3.4 12.4 H6" stroke="#e0e0e0" stroke-width="1.5"/><path d="M14 10.5 V13.5 H11 Z" fill="#5fb38d"/></svg>
<div class="a" style="left:1014.5px;top:979px;width:150.5px;height:16.5px;background:#2a2a2a;border-radius:3px;"></div>
<span class="a t" style="top:980.20px;line-height:16px;font-size:12.5px;letter-spacing:-0.355px;color:#e2e2e2;left:1018px;">Default Keyframe Layer</span>
<div class="a" style="left:1171px;top:979px;width:70px;height:16.5px;background:#2a2a2a;border-radius:3px;"></div>
<span class="a t" style="top:979.60px;line-height:16px;font-size:12.5px;letter-spacing:-0.300px;color:#4f4f4f;left:1175.5px;">F</span>
<span class="a t" style="top:979.30px;line-height:16px;font-size:12.5px;letter-spacing:-0.300px;color:#e2e2e2;left:1188px;">-</span>
<span class="a t" style="top:980.20px;line-height:16px;font-size:12.5px;letter-spacing:-0.128px;color:#e2e2e2;left:1247px;">Align:</span>
<div class="a" style="left:1284px;top:978px;width:52.5px;height:18.5px;background:#2a2a2a;border-radius:3.5px;border:1px solid #505050;"></div>
<div class="a" style="left:1301.5px;top:979px;width:1px;height:16.5px;background:#444;"></div>
<div class="a" style="left:1318.5px;top:979px;width:1px;height:16.5px;background:#444;"></div>
<svg class="a" style="left:1284px;top:978px;" width="53" height="18.5" viewBox="0 0 53 18.5"><path d="M3.2 3 V15.5" stroke="#e6e6e6" stroke-width="1.1"/><path d="M5.2 6.2 H7 M5.2 12 H7" stroke="#6fc5a8" stroke-width="1.6"/><path d="M7.6 6.2 H10.4 M7.6 12 H14" stroke="#e6e6e6" stroke-width="1.6"/><path d="M26.5 3 V15.5" stroke="#e6e6e6" stroke-width="1.1"/><path d="M23 6.2 H30 M21 12 H32" stroke="#e6e6e6" stroke-width="1.6"/><path d="M25.6 6.2 H27.4 M25.6 12 H27.4" stroke="#6fc5a8" stroke-width="1.6"/><path d="M49.8 3 V15.5" stroke="#e6e6e6" stroke-width="1.1"/><path d="M42.4 6.2 H45.4 M39 12 H45.4" stroke="#e6e6e6" stroke-width="1.6"/><path d="M46 6.2 H47.8 M46 12 H47.8" stroke="#6fc5a8" stroke-width="1.6"/></svg>
<div class="a" style="left:1340px;top:978px;width:17.5px;height:18.5px;background:#2a2a2a;border-radius:3.5px;border:1px solid #505050;"></div>
<svg class="a" style="left:1342px;top:980.5px;" width="14" height="14" viewBox="0 0 14 14"><rect x="1.6" y="1.6" width="10.8" height="10.8" fill="none" stroke="#cfcfcf" stroke-width="1" stroke-dasharray="2.4 1.4"/><path d="M0.4 0.4h2.4v2.4h-2.4z M11.2 0.4h2.4v2.4h-2.4z M0.4 11.2h2.4v2.4h-2.4z M11.2 11.2h2.4v2.4h-2.4z" fill="#e6e6e6"/><rect x="6" y="6" width="2" height="2" fill="#e6e6e6"/></svg>
<div class="a" style="left:1362px;top:978px;width:30px;height:18.5px;background:#2a2a2a;border-radius:3.5px;border:1px solid #505050;"></div>
<svg class="a" style="left:1364.5px;top:980.5px;" width="14" height="14" viewBox="0 0 14 14"><g transform="translate(14,0) scale(-1,1)"><path d="M10.8 8.6 L6.4 4.2 A3 3 0 0 0 2.2 8.4 L6 12.2" fill="none" stroke="#e6e6e6" stroke-width="2.4"/></g></svg>
<svg class="a" style="left:1383px;top:983.5px;" width="7" height="8" viewBox="0 0 7 8"><path d="M1 1 L5.6 4 L1 7 Z" fill="none" stroke="#8f8f8f" stroke-width="0.9"/></svg>
<div class="a" style="left:1396.5px;top:978px;width:30.5px;height:18.5px;background:#2a2a2a;border-radius:3.5px;border:1px solid #505050;"></div>
<svg class="a" style="left:1399px;top:981px;" width="16" height="13" viewBox="0 0 16 13"><path d="M0.5 6.5 H3 M4.6 3 V10 M7.4 0.5 V12.5 M10.2 4 V9 M11.8 6.5 H15.5" stroke="#dcdcdc" stroke-width="1.1"/></svg>
<svg class="a" style="left:1417.5px;top:983.5px;" width="7" height="8" viewBox="0 0 7 8"><path d="M1 1 L5.6 4 L1 7 Z" fill="none" stroke="#8f8f8f" stroke-width="0.9"/></svg>
<svg class="a" style="left:1743.5px;top:981px;" width="13" height="13" viewBox="0 0 13 13"><circle cx="6" cy="6" r="5.2" fill="none" stroke="#cfcfcf" stroke-width="1.1"/><path d="M10.2 10.2 L12.2 12.2" stroke="#cfcfcf" stroke-width="1.8" stroke-linecap="round"/><path d="M3.6 6 H8.4" stroke="#cfcfcf" stroke-width="1.1"/></svg>
<div class="a" style="left:1767px;top:985.5px;width:115px;height:3px;background:#585858;border-radius:1.5px;"></div>
<svg class="a" style="left:1761.5px;top:981.5px;" width="11" height="11" viewBox="0 0 11 11"><circle cx="5.5" cy="5.5" r="5" fill="#80d3b4"/><circle cx="5.5" cy="5.5" r="2" fill="#5fa88c"/></svg>
<svg class="a" style="left:1888px;top:980.5px;" width="13" height="13" viewBox="0 0 13 13"><circle cx="6" cy="6" r="5.2" fill="none" stroke="#cfcfcf" stroke-width="1.1"/><path d="M10.2 10.2 L12.2 12.2" stroke="#cfcfcf" stroke-width="1.8" stroke-linecap="round"/><path d="M3.6 6 H8.4 M6 3.6 V8.4" stroke="#cfcfcf" stroke-width="1.1"/></svg>
<div class="a" style="left:494px;top:1004px;width:1420px;height:22.5px;background:#3a3a3a;"></div>
<div class="a" style="left:498.5px;top:1010.5px;width:1.6px;height:1.6px;background:#7a7a7a;border-radius:1px;"></div>
<div class="a" style="left:498.5px;top:1014.5px;width:1.6px;height:1.6px;background:#7a7a7a;border-radius:1px;"></div>
<div class="a" style="left:498.5px;top:1018.5px;width:1.6px;height:1.6px;background:#7a7a7a;border-radius:1px;"></div>
<div class="a" style="left:508px;top:1006px;width:16.5px;height:17.5px;background:#2b2b2b;border-radius:3px;border:1px solid #484848;"></div>
<svg class="a" style="left:510px;top:1008.5px;" width="13" height="13" viewBox="0 0 13 13"><path d="M0.5 0.5 H11.5 V8.5 H6 L3.4 11 V8.5 H0.5 Z" fill="#e0e0e0"/><path d="M2.4 2.6 H9.6 M2.4 4.6 H9.6 M2.4 6.6 H7" stroke="#2b2b2b" stroke-width="0.9"/><path d="M13 10 V13 H10 Z" fill="#5fb38d"/></svg>
<div class="a" style="left:528px;top:1008.3px;width:18px;height:13.5px;background:#2fd06a;border-radius:2px;"></div>
<span class="a t" style="top:1007.20px;line-height:16px;font-size:11.5px;letter-spacing:-0.276px;color:#143a22;left:537px;transform:translateX(-50%);">0</span>
<div class="a" style="left:554px;top:1012px;width:6px;height:6px;background:#2fd06a;border-radius:3px;"></div>
<span class="a t" style="top:1007.30px;line-height:16px;font-size:12.5px;letter-spacing:-0.344px;color:#e2e2e2;left:565px;">Connected:</span>
<span class="a t" style="top:1007.30px;line-height:16px;font-size:12.5px;letter-spacing:-0.260px;color:#d56be0;left:628px;">Oscillator [Position.X] Sine Driver</span>
<span class="a t" style="top:1007.30px;line-height:16px;font-size:12.5px;letter-spacing:0.038px;color:#e2e2e2;left:806px;">to</span>
<span class="a t" style="top:1007.30px;line-height:16px;font-size:12.5px;letter-spacing:-0.289px;color:#c9aa62;left:819px;">Oscillator [Position.Z] Cosine.</span>
<div class="a" style="left:1610px;top:1006px;width:80px;height:18px;background:#d4b95f;border-radius:1.5px;"></div>
<span class="a t" style="top:1008.00px;line-height:16px;font-size:12.5px;letter-spacing:-0.550px;color:#2a2410;left:1615.5px;">Feedback</span>
<svg class="a" style="left:1671px;top:1008.5px;" width="12" height="13" viewBox="0 0 12 13"><path d="M0.8 0.6 H7.6 L10.4 3.4 V12.2 H0.8 Z" fill="#f4f1ea"/><path d="M7.6 0.6 V3.4 H10.4 Z" fill="#cfcabd"/><path d="M2.4 5 H8 M2.4 7 H6" stroke="#b8b3a6" stroke-width="0.8"/><path d="M4.6 10.6 L9.6 5.6 L11.2 7.2 L6.2 12.2 L4.2 12.6 Z" fill="#f08a2e"/></svg>
<div class="a" style="left:1693px;top:1006px;width:109px;height:18px;background:#2fd06a;border-radius:1.5px;"></div>
<span class="a t" style="top:1008.00px;line-height:16px;font-size:12.5px;letter-spacing:-0.412px;color:#0f3a1f;left:1698.5px;">Upgrade to Pro</span>
<svg class="a" style="left:1782.5px;top:1009px;" width="14" height="12" viewBox="0 0 14 12"><path d="M1 11 L0.6 5.4 L2 2.4 L3.2 2.8 L3 5.2 L4 1.6 L5.2 1.8 L5 5.2 L6 5.6 L6.4 8.4 L5 11 Z" fill="#f7c948"/><path d="M13 11 L13.4 5.4 L12 2.4 L10.8 2.8 L11 5.2 L10 1.6 L8.8 1.8 L9 5.2 L8 5.6 L7.6 8.4 L9 11 Z" fill="#f7c948"/></svg>
<div class="a" style="left:1805px;top:1006px;width:106px;height:18px;background:#3ca9f5;border-radius:1.5px;"></div>
<span class="a t" style="top:1008.00px;line-height:16px;font-size:12.5px;letter-spacing:-0.473px;color:#0e2a44;left:1810px;">Tips and Tricks</span>
<svg class="a" style="left:1891.5px;top:1008.5px;" width="13" height="13" viewBox="0 0 13 13"><path d="M12.4 0.6 C8.4 0.6 5.6 2.6 3.8 6 L7 9.2 C10.4 7.4 12.4 4.6 12.4 0.6 Z" fill="#e8ecf0"/><circle cx="8.8" cy="4.2" r="1.3" fill="#4a90d9"/><path d="M3.8 6 L1 6.4 L2.8 4.2 L5 4 Z M7 9.2 L6.6 12 L8.8 10.2 L9 8 Z" fill="#e0454f"/><path d="M3.2 8.4 L1 12 L4.6 9.8 Z" fill="#f5a623"/></svg>
<div class="a" style="left:0px;top:1032px;width:1920px;height:48px;background:linear-gradient(to right,#f2dfe7 0px,#f1dfe5 480px,#f0e2dc 560px,#f0e6d0 612px,#f0e9a6 640px,#e5eeaa 664px,#dcefb1 695px,#e2edb9 730px,#eee6d0 757px,#f0e0de 792px,#efdde4 930px,#efe0de 1000px,#eedde3 1060px,#ebdcec 1200px,#eadaee 1300px,#e9deec 1380px,#e7e5e6 1450px,#dfecce 1520px,#d9f0c2 1567px,#dfecce 1615px,#e8e4e8 1670px,#ecdeee 1740px,#eedfea 1920px);"></div>
<svg class="a" style="left:20px;top:1043.5px;" width="26" height="26" viewBox="0 0 26 26"><path d="M1 1 H12.2 V12.2 H1 Z M13.8 1 H25 V12.2 H13.8 Z M1 13.8 H12.2 V25 H1 Z M13.8 13.8 H25 V25 H13.8 Z" fill="url(#wg)"/><defs><linearGradient id="wg" x1="0" y1="0" x2="1" y2="1"><stop offset="0" stop-color="#5cc6f7"/><stop offset="1" stop-color="#0f7fd6"/></linearGradient></defs></svg>
<svg class="a" style="left:65px;top:1044px;" width="26" height="26" viewBox="0 0 26 26"><circle cx="10.6" cy="10.6" r="8" fill="none" stroke="#1c1c1c" stroke-width="2.4"/><path d="M16.6 16.6 L23 23" stroke="#1c1c1c" stroke-width="2.8" stroke-linecap="round"/></svg>
<svg class="a" style="left:108px;top:1044px;" width="26" height="26" viewBox="0 0 26 26"><defs><linearGradient id="tv1" x1="0" y1="0" x2="0" y2="1"><stop offset="0" stop-color="#3c3c3c"/><stop offset="1" stop-color="#161616"/></linearGradient><linearGradient id="tv2" x1="1" y1="0" x2="0" y2="1"><stop offset="0" stop-color="#ffffff" stop-opacity="0.98"/><stop offset="1" stop-color="#e8e8e8" stop-opacity="0.62"/></linearGradient></defs><rect x="1" y="7" width="18.2" height="16" rx="2" fill="url(#tv1)"/><rect x="6.9" y="0.9" width="17.8" height="15.7" rx="2" fill="url(#tv2)" stroke="#d9d2d8" stroke-width="0.5"/></svg>
<svg class="a" style="left:153px;top:1044.5px;" width="24" height="22" viewBox="0 0 24 22"><defs><linearGradient id="cpA" x1="0.3" y1="0" x2="0.2" y2="1"><stop offset="0" stop-color="#1f7df0"/><stop offset="0.4" stop-color="#30c2ea"/><stop offset="0.66" stop-color="#7fd650"/><stop offset="1" stop-color="#f7d334"/></linearGradient><linearGradient id="cpB" x1="0.7" y1="0" x2="0.4" y2="1"><stop offset="0" stop-color="#a060f8"/><stop offset="0.5" stop-color="#ea5aa6"/><stop offset="1" stop-color="#f6683a"/></linearGradient></defs><path d="M8 1 H15 C17 1 18 2.4 18.6 4.4 L19.4 7 H14.5 C12.5 7 11.6 8 11 10 L8.4 19 H5 C1.6 19 -0.2 16.4 0.8 13 L3.6 4.4 C4.4 2 6 1 8 1 Z" fill="url(#cpA)"/><path d="M16 21 H9 C7 21 6 19.6 5.4 17.6 L4.6 15 H9.5 C11.5 15 12.4 14 13 12 L15.6 3 H19 C22.4 3 24.2 5.6 23.2 9 L20.4 17.6 C19.6 20 18 21 16 21 Z" fill="url(#cpB)"/></svg>
<svg class="a" style="left:195px;top:1044px;" width="27" height="26" viewBox="0 0 27 26"><path d="M1 4 a2 2 0 0 1 2 -2 H9 L12 5 H24 a2 2 0 0 1 2 2 V9 H1 Z" fill="#f0b429"/><rect x="1" y="6.6" width="25" height="17" rx="2" fill="#fcd354"/><rect x="7" y="17.4" width="13" height="6.2" rx="1.4" fill="#1f7fe0"/></svg>
<div class="a" style="left:205.7px;top:1072.2px;width:6px;height:2.5px;background:#8b8b8b;border-radius:1.25px;"></div>
<svg class="a" style="left:240px;top:1043px;" width="26" height="27" viewBox="0 0 26 27"><path d="M8 7 V4.6 a2.6 2.6 0 0 1 2.6 -2.6 H15.4 a2.6 2.6 0 0 1 2.6 2.6 V7" fill="none" stroke="#1e88d8" stroke-width="2"/><path d="M1 7 H25 V22 a3 3 0 0 1 -3 3 H4 a3 3 0 0 1 -3 -3 Z" fill="#14549c"/><rect x="8" y="10.6" width="4.4" height="4.4" fill="#f25022"/><rect x="13.6" y="10.6" width="4.4" height="4.4" fill="#7fba00"/><rect x="8" y="16.2" width="4.4" height="4.4" fill="#00a4ef"/><rect x="13.6" y="16.2" width="4.4" height="4.4" fill="#ffb900"/></svg>
<svg class="a" style="left:283px;top:1043px;" width="28" height="28" viewBox="0 0 28 28"><g transform="rotate(45 14 14)"><rect x="5" y="5" width="8.4" height="8.4" rx="1.2" fill="#f06a72"/><rect x="14.6" y="5" width="8.4" height="8.4" rx="1.2" fill="#7cc85a"/><rect x="5" y="14.6" width="8.4" height="8.4" rx="1.2" fill="#5aa8f0"/><rect x="14.6" y="14.6" width="8.4" height="8.4" rx="1.2" fill="#f6e26a"/></g><path d="M14 6 L19 11 M19 11 L16.4 13.6" stroke="#5a7d3a" stroke-width="1.6" fill="none"/><circle cx="19.4" cy="11.4" r="1.6" fill="#fff"/></svg>
<div class="a" style="left:293.7px;top:1072.2px;width:6px;height:2.5px;background:#8b8b8b;border-radius:1.25px;"></div>
<svg class="a" style="left:328px;top:1046px;" width="25" height="22" viewBox="0 0 25 22"><rect x="0.5" y="0.5" width="24" height="20" rx="2.2" fill="#3a3a3a"/><rect x="0.5" y="0.5" width="24" height="4.6" rx="2.2" fill="#5a5a5a"/><path d="M4.6 8.6 L8.4 11.8 L4.6 15 " fill="none" stroke="#fff" stroke-width="1.7"/><path d="M10.4 15.4 H16.4" stroke="#fff" stroke-width="1.7"/></svg>
<div class="a" style="left:337.7px;top:1072.2px;width:6px;height:2.5px;background:#8b8b8b;border-radius:1.25px;"></div>
<svg class="a" style="left:371px;top:1043.5px;" width="27" height="27" viewBox="0 0 27 27"><circle cx="13.5" cy="13.5" r="12.5" fill="#fff"/><path d="M13.5 1 A12.5 12.5 0 0 1 24.3 7.25 H13.5 A6.25 6.25 0 0 0 8.1 10.4 L2.7 7.25 A12.5 12.5 0 0 1 13.5 1 Z" fill="#ea4335" transform="rotate(0 13.5 13.5)"/><path d="M24.3 7.25 A12.5 12.5 0 0 1 13.5 26 L18.9 16.6 A6.25 6.25 0 0 0 18.9 10.4 L13.5 7.25 Z" fill="#fbbc04"/><path d="M2.7 7.25 L8.1 16.6 A6.25 6.25 0 0 0 13.5 19.75 L13.5 26 A12.5 12.5 0 0 1 2.7 7.25 Z" fill="#34a853"/><path d="M13.5 19.75 A6.25 6.25 0 0 0 18.9 16.6 L13.5 26 Z" fill="#fbbc04"/><circle cx="13.5" cy="13.5" r="5.6" fill="#fff"/><circle cx="13.5" cy="13.5" r="4.5" fill="#4285f4"/></svg>
<div class="a" style="left:381.7px;top:1072.2px;width:6px;height:2.5px;background:#8b8b8b;border-radius:1.25px;"></div>
<svg class="a" style="left:415px;top:1043.5px;" width="27" height="27" viewBox="0 0 27 27"><defs><linearGradient id="eg1" x1="0" y1="0" x2="1" y2="1"><stop offset="0" stop-color="#35c1f1"/><stop offset="1" stop-color="#1b8a5e"/></linearGradient><linearGradient id="eg2" x1="0" y1="0" x2="0" y2="1"><stop offset="0" stop-color="#2aa8e6"/><stop offset="1" stop-color="#1452b8"/></linearGradient></defs><path d="M13.5 1.2 C21 1.2 26 6.6 26 12.6 C26 16.6 23 19 20 19 C17.6 19 16.2 18 16.2 17 C16.2 16 17.4 15.8 17.4 13.6 C17.4 11 15 9 12 9 C7.6 9 4.4 12.6 4.4 17 C4.4 19 4.8 20.4 5.4 21.6 C2.8 19.6 1 16.4 1 12.6 C1 6 6.6 1.2 13.5 1.2 Z" fill="url(#eg1)"/><path d="M5.4 21.6 C4.8 20.4 4.4 19 4.4 17 C4.4 12.6 7.6 9 12 9 C9.6 10.4 8.6 13 9 16 C9.6 20.6 13.6 23.6 18 23.6 C20.4 23.6 22.6 22.6 24 21.4 C21.6 24.4 18 26 14 26 C10.4 26 7.4 24.2 5.4 21.6 Z" fill="url(#eg2)"/></svg>
<div class="a" style="left:425.7px;top:1072.2px;width:6px;height:2.5px;background:#8b8b8b;border-radius:1.25px;"></div>
<svg class="a" style="left:459px;top:1043.5px;" width="27" height="27" viewBox="0 0 27 27"><path d="M19.4 1 L26 4.2 V22.8 L19.4 26 L7.8 15.2 L3.2 18.8 L1 17.6 V9.4 L3.2 8.2 L7.8 11.8 Z M19.4 7.8 L11.6 13.5 L19.4 19.2 Z" fill="#1f8ad2"/><path d="M19.4 1 L26 4.2 V22.8 L19.4 26 Z" fill="#2aa3f0"/></svg>
<div class="a" style="left:469.7px;top:1072.2px;width:6px;height:2.5px;background:#8b8b8b;border-radius:1.25px;"></div>
<div class="a" style="left:496.5px;top:1036px;width:41px;height:40px;background:rgba(255,255,255,0.62);border-radius:5px;box-shadow:0 0 0 0.6px rgba(0,0,0,0.05);"></div>
<svg class="a" style="left:506px;top:1045px;" width="22" height="22" viewBox="0 0 22 22"><rect x="0" y="0" width="22" height="22" rx="5.4" fill="#0a0a0a"/><path d="M15.6 6.6 A6 6 0 1 0 15.6 15.4" fill="none" stroke="#f0f0f0" stroke-width="2.2"/><path d="M11 7.4 L14 9.2 V12.8 L11 14.6 L8 12.8 V9.2 Z M8 9.2 L14 12.8 M14 9.2 L8 12.8 M11 7.4 V14.6" fill="none" stroke="#8a8a8a" stroke-width="0.5"/></svg>
<div class="a" style="left:509.5px;top:1071.8px;width:15.5px;height:3px;background:#1a78d6;border-radius:1.5px;"></div>
<svg class="a" style="left:547px;top:1043px;" width="27" height="27" viewBox="0 0 27 27"><path d="M6 2 H26 V8 H6 Z" fill="#5ab8f2" transform="skewX(-8) translate(3 0)"/><rect x="1" y="6" width="24" height="20" rx="2.4" fill="#1a7ad8"/><path d="M10 10.6 V21.6 L19.4 16.1 Z" fill="#fff"/></svg>
<div class="a" style="left:557.7px;top:1072.2px;width:6px;height:2.5px;background:#8b8b8b;border-radius:1.25px;"></div>
<svg class="a" style="left:1639px;top:1052px;" width="14" height="9" viewBox="0 0 14 9"><path d="M1.2 7.4 L7 1.6 L12.8 7.4" fill="none" stroke="#1c1c1c" stroke-width="1.5"/></svg>
<svg class="a" style="left:1670px;top:1048.5px;" width="17" height="16" viewBox="0 0 17 16"><path d="M0.5 4 H16 M0.5 11.6 H16" stroke="#1c1c1c" stroke-width="1.8"/><rect x="9.4" y="1" width="3" height="6" fill="#1c1c1c"/><rect x="3.6" y="8.6" width="3" height="6" fill="#1c1c1c"/><path d="M13 2 L16.4 4 L13 6 Z M3.4 9.6 L0 11.6 L3.4 13.6 Z" fill="#1c1c1c"/></svg>
<svg class="a" style="left:1701px;top:1050px;" width="17" height="14" viewBox="0 0 17 14"><path d="M1 0.5 V13.5 M16 0.5 V13.5" stroke="#1c1c1c" stroke-width="1.6"/><path d="M4 13 V3 L8.5 9 L13 3 V13" fill="none" stroke="#1c1c1c" stroke-width="2"/></svg>
<svg class="a" style="left:1731px;top:1049px;" width="20" height="15" viewBox="0 0 20 15"><path d="M1 5.4 A12.6 12.6 0 0 1 19 5.4 M3.8 8.4 A8.6 8.6 0 0 1 16.2 8.4 M6.8 11.2 A4.4 4.4 0 0 1 13.2 11.2" fill="none" stroke="#1c1c1c" stroke-width="1.3"/><circle cx="10" cy="13.2" r="1.3" fill="#1c1c1c"/></svg>
<svg class="a" style="left:1757px;top:1048.5px;" width="19" height="16" viewBox="0 0 19 16"><path d="M1 5.4 H4 L8.6 1.4 V14.6 L4 10.6 H1 Z" fill="none" stroke="#1c1c1c" stroke-width="1.2" stroke-linejoin="round"/><path d="M11 5 A4 4 0 0 1 11 11 M13.4 2.8 A7.4 7.4 0 0 1 13.4 13.2 M15.8 0.8 A10.4 10.4 0 0 1 15.8 15.2" fill="none" stroke="#1c1c1c" stroke-width="1.1"/></svg>
<svg class="a" style="left:1781px;top:1048px;" width="18" height="16" viewBox="0 0 18 16"><rect x="1.4" y="4.4" width="13.2" height="9" rx="2" fill="none" stroke="#1c1c1c" stroke-width="1.2"/><rect x="3.2" y="6.2" width="8" height="5.4" rx="0.8" fill="#1c1c1c"/><path d="M15.2 7.4 H16.8 V10.4 H15.2" fill="none" stroke="#1c1c1c" stroke-width="1"/><path d="M4 0.6 L2 4.4 H4.6 L3.4 7.6 L7 3.4 H4.6 L6 0.6 Z" fill="#1c1c1c" stroke="#efe" stroke-width="0.5"/></svg>
<span class="a t" style="top:1039.50px;line-height:16px;font-size:12px;letter-spacing:-0.306px;color:#1a1a1a;right:43.5px;">18.53</span>
<span class="a t" style="top:1055.50px;line-height:16px;font-size:12px;letter-spacing:0.194px;color:#1a1a1a;right:43px;">28/09/2025</span>
<svg class="a" style="left:1884px;top:1047.5px;" width="17" height="18" viewBox="0 0 17 18"><path d="M3 12.6 V8 a5 5 0 0 1 10 0 V12.6 L14.6 14.6 H1.4 Z" fill="#1c1c1c"/><path d="M6.2 15.6 a2 2 0 0 0 3.6 0 Z" fill="#1c1c1c"/><text x="5.4" y="12" font-family="Liberation Sans" font-size="6.5" font-weight="bold" fill="#fff">z</text><text x="11.5" y="5" font-family="Liberation Sans" font-size="6.5" font-weight="bold" fill="#1c1c1c">z</text></svg>
</body></html>
